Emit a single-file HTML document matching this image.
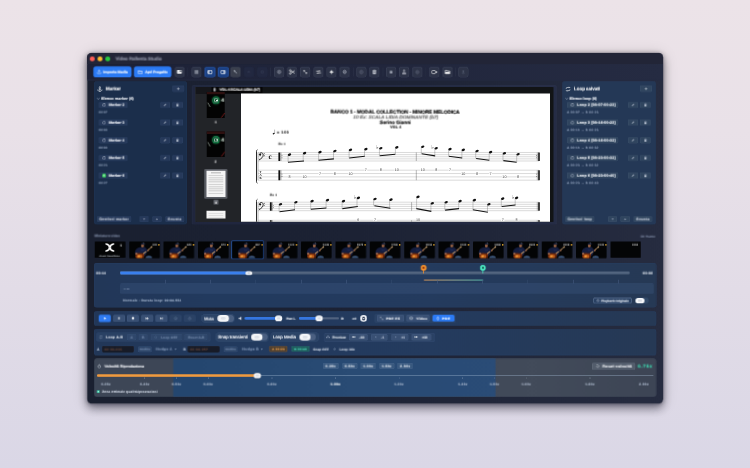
<!DOCTYPE html>
<html lang="it"><head><meta charset="utf-8"><title>Video Rallenta Studio</title>
<style>
html,body{margin:0;padding:0}
body{width:750px;height:468px;overflow:hidden;position:relative;background:linear-gradient(180deg,#ece3e8 0%,#e9e1e8 28%,#e2dce7 62%,#dad7e6 100%);font-family:"Liberation Sans",sans-serif}
#stage{transform-style:preserve-3d;position:absolute;left:0;top:0;width:3000px;height:1872px;transform:scale(.25);transform-origin:0 0}
.a{position:absolute;box-sizing:border-box}
.t{position:absolute;white-space:nowrap;line-height:1;text-rendering:geometricPrecision;-webkit-text-stroke:.4px currentColor;transform:rotate(.15deg)}
svg text{text-rendering:geometricPrecision}
</style></head><body>
<div id="stage">
<div class="a" style="left:348.8px;top:213.2px;width:2302.8px;height:1401.2px;border-radius:16.8px;background:linear-gradient(90deg,#1a2030,#1c2234 45%,#262c40);box-shadow:0 16px 40px rgba(15,15,32,.46),0 2px 16px rgba(15,15,32,.3),0 4px 64px rgba(15,15,32,.16),0 0 0 1.2px rgba(10,12,20,.5);overflow:hidden">
</div>
<div class="a" style="left:348.8px;top:213.2px;width:2302.8px;height:43.6px;background:#222537;border-radius:16.8px 16.8px 0 0;"></div>
<div class="a" style="left:348.8px;top:256.8px;width:2302.8px;height:61.6px;background:linear-gradient(90deg,#1d2136,#20253b 40%,#252b42);"></div>
<div class="a" style="left:348.8px;top:318px;width:2302.8px;height:4.4px;background:#242b42;"></div>
<div class="a" style="left:359.4px;top:225.8px;width:19.6px;height:19.6px;background:#fe5f57;border-radius:9.8px;"></div>
<div class="a" style="left:390.2px;top:225.8px;width:19.6px;height:19.6px;background:#febc2e;border-radius:9.8px;"></div>
<div class="a" style="left:421.4px;top:225.8px;width:19.6px;height:19.6px;background:#28c840;border-radius:9.8px;"></div>
<div class="t" style="left:462px;top:227.06px;font-size:18.97px;color:#9499ab;font-weight:700;letter-spacing:-0.43px;">Video Rallenta Studio</div>
<div class="a" style="left:374.4px;top:266.4px;width:151.2px;height:42.4px;background:#2b7af4;border-radius:10.4px;box-shadow:0 0 5.6px rgba(43,122,244,.5);"></div>
<svg class="a" style="left:386.4px;top:277.8px;width:20.8px;height:20.8px;overflow:visible;opacity:0.792;" viewBox="0 0 24 24"><path d="M12 3v11M7.5 8L12 3l4.5 5M4 14v5h16v-5" fill="none" stroke="#fff" stroke-width="2.4" stroke-linecap="round" stroke-linejoin="round"/></svg>
<div class="t" style="left:412.8px;top:281.59px;font-size:14.69px;color:#ffffff;font-weight:700;letter-spacing:-0.09px;">Importa Media</div>
<div class="a" style="left:536px;top:266.4px;width:148.8px;height:42.4px;background:#2b7af4;border-radius:10.4px;box-shadow:0 0 5.6px rgba(43,122,244,.5);"></div>
<svg class="a" style="left:549.6px;top:277px;width:22.4px;height:22.4px;overflow:visible;opacity:0.836;" viewBox="0 0 24 24"><path d="M3 6h7l2 2.5h9V19H3z" fill="none" stroke="#fff" stroke-width="2.4" stroke-linejoin="round"/><path d="M3 11h18" stroke="#fff" stroke-width="2.2"/></svg>
<div class="t" style="left:580px;top:281.59px;font-size:14.69px;color:#ffffff;font-weight:700;letter-spacing:-0.3px;">Apri Progetto</div>
<div class="a" style="left:698.8px;top:267.6px;width:38.8px;height:41.2px;background:#2d3347;border-radius:9.6px;box-shadow:inset 0 0 0 1.6px #464d63;"></div>
<svg class="a" style="left:705.6px;top:276.2px;width:23.2px;height:23.2px;overflow:visible;opacity:0.88;" viewBox="0 0 24 24"><rect x="2" y="4.500" width="20" height="15" rx="2.500" fill="#fff"/><path d="M13 6.500h7v6l-3-2.500-2 2z" fill="#2d3347"/></svg>
<div class="a" style="left:750.8px;top:270px;width:1.6px;height:36.4px;background:#2f354a;"></div>
<div class="a" style="left:1082px;top:270px;width:1.6px;height:36.4px;background:#2f354a;"></div>
<div class="a" style="left:1412px;top:270px;width:1.6px;height:36.4px;background:#2f354a;"></div>
<div class="a" style="left:1531.2px;top:270px;width:1.6px;height:36.4px;background:#2f354a;"></div>
<div class="a" style="left:1702.8px;top:270px;width:1.6px;height:36.4px;background:#2f354a;"></div>
<div class="a" style="left:1821.2px;top:270px;width:1.6px;height:36.4px;background:#2f354a;"></div>
<div class="a" style="left:765.6px;top:267.6px;width:40.8px;height:41.2px;background:#2d3347;border-radius:9.6px;box-shadow:inset 0 0 0 1.6px #464d63;"></div>
<svg class="a" style="left:774.8px;top:277px;width:22.4px;height:22.4px;overflow:visible;opacity:0.88;" viewBox="0 0 24 24"><path d="M4 6h16M4 10h16M4 14h16M4 18h16" stroke="#cfd4df" stroke-width="2.6"/></svg>
<div class="a" style="left:818px;top:267.6px;width:43.6px;height:41.2px;background:#1c4184;border-radius:9.6px;box-shadow:inset 0 0 0 2px #2c62bd;"></div>
<svg class="a" style="left:828.2px;top:276.6px;width:23.2px;height:23.2px;overflow:visible;opacity:0.88;" viewBox="0 0 24 24"><rect x="2" y="4" width="20" height="16" rx="3" fill="#fff"/><rect x="10" y="7" width="9" height="10" rx="1" fill="#1c4184"/><rect x="4.500" y="7" width="3" height="10" fill="#1c4184" opacity=".35"/></svg>
<div class="a" style="left:871.2px;top:267.6px;width:43.6px;height:41.2px;background:#1c4184;border-radius:9.6px;box-shadow:inset 0 0 0 2px #2c62bd;"></div>
<svg class="a" style="left:881.4px;top:276.6px;width:23.2px;height:23.2px;overflow:visible;opacity:0.88;" viewBox="0 0 24 24"><rect x="2" y="4" width="20" height="16" rx="3" fill="#fff"/><rect x="5" y="7" width="9" height="10" rx="1" fill="#1c4184"/><rect x="16.500" y="7" width="3" height="10" fill="#1c4184" opacity=".35"/></svg>
<div class="a" style="left:922.4px;top:267.6px;width:39.2px;height:41.2px;background:#3a3f4d;border-radius:9.6px;box-shadow:inset 0 0 0 1.4px #4a5060;"></div>
<svg class="a" style="left:930.8px;top:277px;width:22.4px;height:22.4px;overflow:visible;opacity:0.792;" viewBox="0 0 24 24"><path d="M5 5l4 1 10 11-2 2L6 9z" fill="#b9bec9"/><circle cx="7" cy="7" r="3.4" fill="#b9bec9"/></svg>
<div class="a" style="left:975.6px;top:267.6px;width:40.8px;height:41.2px;background:#222840;border-radius:9.6px;box-shadow:inset 0 0 0 1.2px #272d44;"></div>
<svg class="a" style="left:986px;top:278.2px;width:20px;height:20px;overflow:visible;opacity:0.7040000000000001;" viewBox="0 0 24 24"><path d="M6 16l5-8 5 8" fill="none" stroke="#59607a" stroke-width="2.4"/></svg>
<div class="a" style="left:1028.8px;top:267.6px;width:40.8px;height:41.2px;background:#222840;border-radius:9.6px;box-shadow:inset 0 0 0 1.2px #272d44;"></div>
<svg class="a" style="left:1039.2px;top:278.2px;width:20px;height:20px;overflow:visible;opacity:0.7040000000000001;" viewBox="0 0 24 24"><circle cx="12" cy="12" r="6" fill="none" stroke="#50576f" stroke-width="2.4"/></svg>
<div class="a" style="left:1096px;top:267.6px;width:40.8px;height:41.2px;background:#2d3347;border-radius:9.6px;box-shadow:inset 0 0 0 1.6px #464d63;"></div>
<svg class="a" style="left:1105.6px;top:277.4px;width:21.6px;height:21.6px;overflow:visible;opacity:0.88;" viewBox="0 0 24 24"><circle cx="12" cy="12" r="7" fill="none" stroke="#c9ceda" stroke-width="2.8"/><circle cx="12" cy="12" r="2.400" fill="#c9ceda"/></svg>
<div class="a" style="left:1147.6px;top:267.6px;width:40.8px;height:41.2px;background:#2d3347;border-radius:9.6px;box-shadow:inset 0 0 0 1.6px #464d63;"></div>
<svg class="a" style="left:1155.2px;top:275.4px;width:25.6px;height:25.6px;overflow:visible;opacity:0.88;" viewBox="0 0 24 24"><circle cx="5.5" cy="6.5" r="3" fill="none" stroke="#fff" stroke-width="2.6"/><circle cx="5.5" cy="17.5" r="3" fill="none" stroke="#fff" stroke-width="2.6"/><path d="M8 8l14 9M8 16l14-9" stroke="#fff" stroke-width="2.8"/></svg>
<div class="a" style="left:1200px;top:267.6px;width:40.8px;height:41.2px;background:#2d3347;border-radius:9.6px;box-shadow:inset 0 0 0 1.6px #464d63;"></div>
<svg class="a" style="left:1209.6px;top:277.4px;width:21.6px;height:21.6px;overflow:visible;opacity:0.836;" viewBox="0 0 24 24"><rect x="4" y="4" width="6.5" height="6.5" fill="#fff"/><rect x="13.5" y="13.5" width="6.5" height="6.5" fill="#fff"/><path d="M10 10l4 4" stroke="#fff" stroke-width="2"/></svg>
<div class="a" style="left:1253.6px;top:267.6px;width:40.8px;height:41.2px;background:#2d3347;border-radius:9.6px;box-shadow:inset 0 0 0 1.6px #464d63;"></div>
<svg class="a" style="left:1261.6px;top:275.8px;width:24.8px;height:24.8px;overflow:visible;opacity:0.88;" viewBox="0 0 24 24"><path d="M3 8.500h15l-3.500-3.500M21 15.500H6l3.500 3.500" fill="none" stroke="#fff" stroke-width="2.800" stroke-linejoin="round"/></svg>
<div class="a" style="left:1305.6px;top:267.6px;width:40.8px;height:41.2px;background:#2d3347;border-radius:9.6px;box-shadow:inset 0 0 0 1.6px #464d63;"></div>
<svg class="a" style="left:1314.8px;top:277px;width:22.4px;height:22.4px;overflow:visible;opacity:0.88;" viewBox="0 0 24 24"><circle cx="12" cy="12" r="5.500" fill="#fff"/><path d="M12 2.500v19M2.500 12h19" stroke="#fff" stroke-width="2.200"/></svg>
<div class="a" style="left:1358.4px;top:267.6px;width:40.8px;height:41.2px;background:#2d3347;border-radius:9.6px;box-shadow:inset 0 0 0 1.6px #464d63;"></div>
<svg class="a" style="left:1368px;top:277.4px;width:21.6px;height:21.6px;overflow:visible;opacity:0.88;" viewBox="0 0 24 24"><circle cx="12" cy="12" r="7" fill="none" stroke="#c4c9d5" stroke-width="2.800"/><circle cx="12" cy="12" r="2.800" fill="none" stroke="#c4c9d5" stroke-width="2"/></svg>
<div class="a" style="left:1424.8px;top:267.6px;width:40.8px;height:41.2px;background:#2d3347;border-radius:9.6px;box-shadow:inset 0 0 0 1.6px #464d63;"></div>
<svg class="a" style="left:1434.8px;top:277.8px;width:20.8px;height:20.8px;overflow:visible;opacity:0.748;" viewBox="0 0 24 24"><circle cx="12" cy="12" r="7.5" fill="none" stroke="#8e95a8" stroke-width="2.4"/><path d="M12 11v5" stroke="#8e95a8" stroke-width="2.4"/><circle cx="12" cy="8" r="1.4" fill="#8e95a8"/></svg>
<div class="a" style="left:1477.2px;top:267.6px;width:40.8px;height:41.2px;background:#2d3347;border-radius:9.6px;box-shadow:inset 0 0 0 1.6px #464d63;"></div>
<svg class="a" style="left:1486px;top:276.6px;width:23.2px;height:23.2px;overflow:visible;opacity:0.88;" viewBox="0 0 24 24"><rect x="5.5" y="3" width="13" height="18" rx="2" fill="#e6e9f0"/><path d="M8.5 8h7M8.5 12h7M8.5 16h7" stroke="#2c3245" stroke-width="1.8"/></svg>
<div class="a" style="left:1544px;top:267.6px;width:40.8px;height:41.2px;background:#2d3347;border-radius:9.6px;box-shadow:inset 0 0 0 1.6px #464d63;"></div>
<svg class="a" style="left:1554px;top:277.8px;width:20.8px;height:20.8px;overflow:visible;opacity:0.792;" viewBox="0 0 24 24"><rect x="6" y="6" width="12" height="12" rx="2" fill="#b9bfcc"/></svg>
<div class="a" style="left:1596.4px;top:267.6px;width:40.8px;height:41.2px;background:#2d3347;border-radius:9.6px;box-shadow:inset 0 0 0 1.6px #464d63;"></div>
<svg class="a" style="left:1605.2px;top:276.6px;width:23.2px;height:23.2px;overflow:visible;opacity:0.88;" viewBox="0 0 24 24"><path d="M12 3v11M8 7l4-4 4 4" fill="none" stroke="#e6e9f0" stroke-width="2.8"/><path d="M4 15h16v5H4z" fill="#e6e9f0"/></svg>
<div class="a" style="left:1649.2px;top:267.6px;width:40.8px;height:41.2px;background:#2d3347;border-radius:9.6px;box-shadow:inset 0 0 0 1.6px #464d63;"></div>
<svg class="a" style="left:1659.2px;top:277.8px;width:20.8px;height:20.8px;overflow:visible;opacity:0.748;" viewBox="0 0 24 24"><circle cx="12" cy="12" r="7.5" fill="none" stroke="#7d8498" stroke-width="2.4"/><circle cx="12" cy="12" r="3" fill="none" stroke="#7d8498" stroke-width="2"/></svg>
<div class="a" style="left:1717.2px;top:267.6px;width:40.8px;height:41.2px;background:#2d3347;border-radius:9.6px;box-shadow:inset 0 0 0 1.6px #464d63;"></div>
<svg class="a" style="left:1725.2px;top:275.8px;width:24.8px;height:24.8px;overflow:visible;opacity:0.88;" viewBox="0 0 24 24"><rect x="2.5" y="6" width="14" height="12" rx="2.4" fill="none" stroke="#fff" stroke-width="2.6"/><path d="M17 10.5l5-3v9l-5-3z" fill="#fff"/></svg>
<div class="a" style="left:1770px;top:267.6px;width:40.8px;height:41.2px;background:#2d3347;border-radius:9.6px;box-shadow:inset 0 0 0 1.6px #464d63;"></div>
<svg class="a" style="left:1778.4px;top:276.2px;width:24px;height:24px;overflow:visible;opacity:0.88;" viewBox="0 0 24 24"><path d="M3 5.5h7l2 2.5h9V19H3z" fill="none" stroke="#fff" stroke-width="2.6" stroke-linejoin="round"/><path d="M3 11h18v8H3z" fill="#fff"/></svg>
<div class="a" style="left:1832.8px;top:267.6px;width:40.8px;height:41.2px;background:#2d3347;border-radius:9.6px;box-shadow:inset 0 0 0 1.6px #464d63;"></div>
<svg class="a" style="left:1843.2px;top:278.2px;width:20px;height:20px;overflow:visible;opacity:0.7040000000000001;" viewBox="0 0 24 24"><path d="M12 5v9M8 9l4-4 4 4" fill="none" stroke="#8b92a6" stroke-width="2.4"/><path d="M6 18h12" stroke="#8b92a6" stroke-width="2.4"/></svg>
<div class="a" style="left:376px;top:325.2px;width:372px;height:572.8px;background:#1b2e4b;border-radius:12.8px;box-shadow:inset 0 0 0 1.2px #243a5c;"></div>
<svg class="a" style="left:387.2px;top:344px;width:24.8px;height:24.8px;overflow:visible;opacity:0.88;" viewBox="0 0 24 24"><circle cx="12" cy="5" r="2.6" fill="none" stroke="#fff" stroke-width="2.4"/><path d="M12 8v13M7 12h10M3.5 14c1 5 4.5 7 8.500 7s7.500-2 8.500-7" fill="none" stroke="#fff" stroke-width="2.6"/></svg>
<div class="t" style="left:422.8px;top:347.4px;font-size:18.23px;color:#ffffff;font-weight:700;letter-spacing:0.04px;">Marker</div>
<div class="a" style="left:688.8px;top:342.4px;width:48.4px;height:26px;background:#26395a;border-radius:5.6px;box-shadow:inset 0 0 0 1.2px #34496b;"></div>
<svg class="a" style="left:703.8px;top:346.2px;width:18.4px;height:18.4px;overflow:visible;opacity:0.88;" viewBox="0 0 24 24"><path d="M12 5v14M5 12h14" stroke="#e8ecf3" stroke-width="2.6"/></svg>
<svg class="a" style="left:386.4px;top:388.4px;width:14.4px;height:14.4px;overflow:visible;opacity:0.88;" viewBox="0 0 24 24"><path d="M4 7l8 9 8-9" fill="none" stroke="#d5dce8" stroke-width="3.6"/></svg>
<div class="t" style="left:405.2px;top:388.1px;font-size:14.88px;color:#f0f3f8;font-weight:700;letter-spacing:0.35px;">Elenco marker (6)</div>
<div class="a" style="left:394.8px;top:407.6px;width:114.8px;height:24.8px;background:#26395a;border-radius:5.6px;box-shadow:inset 0 0 0 1.2px #34496b;"></div>
<div class="a" style="left:409.6px;top:413.2px;width:13.6px;height:13.6px;border-radius:6.8px;box-shadow:inset 0 0 0 2.2px #d3dbe9;"></div>
<div class="t" style="left:434.8px;top:413.47px;font-size:14.51px;color:#f2f5fa;font-weight:700;letter-spacing:0.39px;">Marker 2</div>
<div class="a" style="left:640.8px;top:407.6px;width:39.6px;height:24.8px;background:#26395a;border-radius:5.6px;box-shadow:inset 0 0 0 1.2px #34496b;"></div>
<svg class="a" style="left:653.4px;top:412.8px;width:14.4px;height:14.4px;overflow:visible;opacity:0.88;" viewBox="0 0 24 24"><path d="M4 20l1-5L16 4l4 4L9 19z" fill="#c3cbd9"/></svg>
<div class="a" style="left:688.8px;top:407.6px;width:43.2px;height:24.8px;background:#26395a;border-radius:5.6px;box-shadow:inset 0 0 0 1.2px #34496b;"></div>
<svg class="a" style="left:702.4px;top:412px;width:16px;height:16px;overflow:visible;opacity:0.88;" viewBox="0 0 24 24"><path d="M6 8h12v13H6z" fill="#c3cbd9"/><path d="M4 5.5h16M9.5 3h5" stroke="#c3cbd9" stroke-width="2.4"/></svg>
<div class="t" style="left:394.8px;top:442.48px;font-size:12.28px;color:#93a3bd;letter-spacing:0.74px;">00:07</div>
<div class="a" style="left:394.8px;top:478.24px;width:114.8px;height:24.8px;background:#26395a;border-radius:5.6px;box-shadow:inset 0 0 0 1.2px #34496b;"></div>
<div class="a" style="left:409.6px;top:483.84px;width:13.6px;height:13.6px;border-radius:6.8px;box-shadow:inset 0 0 0 2.2px #d3dbe9;"></div>
<div class="t" style="left:434.8px;top:484.11px;font-size:14.51px;color:#f2f5fa;font-weight:700;letter-spacing:0.39px;">Marker 3</div>
<div class="a" style="left:640.8px;top:478.24px;width:39.6px;height:24.8px;background:#26395a;border-radius:5.6px;box-shadow:inset 0 0 0 1.2px #34496b;"></div>
<svg class="a" style="left:653.4px;top:483.44px;width:14.4px;height:14.4px;overflow:visible;opacity:0.88;" viewBox="0 0 24 24"><path d="M4 20l1-5L16 4l4 4L9 19z" fill="#c3cbd9"/></svg>
<div class="a" style="left:688.8px;top:478.24px;width:43.2px;height:24.8px;background:#26395a;border-radius:5.6px;box-shadow:inset 0 0 0 1.2px #34496b;"></div>
<svg class="a" style="left:702.4px;top:482.64px;width:16px;height:16px;overflow:visible;opacity:0.88;" viewBox="0 0 24 24"><path d="M6 8h12v13H6z" fill="#c3cbd9"/><path d="M4 5.5h16M9.5 3h5" stroke="#c3cbd9" stroke-width="2.4"/></svg>
<div class="t" style="left:394.8px;top:513.12px;font-size:12.28px;color:#93a3bd;letter-spacing:0.74px;">00:09</div>
<div class="a" style="left:394.8px;top:548.88px;width:114.8px;height:24.8px;background:#26395a;border-radius:5.6px;box-shadow:inset 0 0 0 1.2px #34496b;"></div>
<div class="a" style="left:409.6px;top:554.48px;width:13.6px;height:13.6px;border-radius:6.8px;box-shadow:inset 0 0 0 2.2px #d3dbe9;"></div>
<div class="t" style="left:434.8px;top:554.75px;font-size:14.51px;color:#f2f5fa;font-weight:700;letter-spacing:0.39px;">Marker 4</div>
<div class="a" style="left:640.8px;top:548.88px;width:39.6px;height:24.8px;background:#26395a;border-radius:5.6px;box-shadow:inset 0 0 0 1.2px #34496b;"></div>
<svg class="a" style="left:653.4px;top:554.08px;width:14.4px;height:14.4px;overflow:visible;opacity:0.88;" viewBox="0 0 24 24"><path d="M4 20l1-5L16 4l4 4L9 19z" fill="#c3cbd9"/></svg>
<div class="a" style="left:688.8px;top:548.88px;width:43.2px;height:24.8px;background:#26395a;border-radius:5.6px;box-shadow:inset 0 0 0 1.2px #34496b;"></div>
<svg class="a" style="left:702.4px;top:553.28px;width:16px;height:16px;overflow:visible;opacity:0.88;" viewBox="0 0 24 24"><path d="M6 8h12v13H6z" fill="#c3cbd9"/><path d="M4 5.5h16M9.5 3h5" stroke="#c3cbd9" stroke-width="2.4"/></svg>
<div class="t" style="left:394.8px;top:583.76px;font-size:12.28px;color:#93a3bd;letter-spacing:0.74px;">00:00</div>
<div class="a" style="left:394.8px;top:619.52px;width:114.8px;height:24.8px;background:#26395a;border-radius:5.6px;box-shadow:inset 0 0 0 1.2px #34496b;"></div>
<div class="a" style="left:409.6px;top:625.12px;width:13.6px;height:13.6px;border-radius:6.8px;box-shadow:inset 0 0 0 2.2px #d3dbe9;"></div>
<div class="t" style="left:434.8px;top:625.39px;font-size:14.51px;color:#f2f5fa;font-weight:700;letter-spacing:0.39px;">Marker 5</div>
<div class="a" style="left:640.8px;top:619.52px;width:39.6px;height:24.8px;background:#26395a;border-radius:5.6px;box-shadow:inset 0 0 0 1.2px #34496b;"></div>
<svg class="a" style="left:653.4px;top:624.72px;width:14.4px;height:14.4px;overflow:visible;opacity:0.88;" viewBox="0 0 24 24"><path d="M4 20l1-5L16 4l4 4L9 19z" fill="#c3cbd9"/></svg>
<div class="a" style="left:688.8px;top:619.52px;width:43.2px;height:24.8px;background:#26395a;border-radius:5.6px;box-shadow:inset 0 0 0 1.2px #34496b;"></div>
<svg class="a" style="left:702.4px;top:623.92px;width:16px;height:16px;overflow:visible;opacity:0.88;" viewBox="0 0 24 24"><path d="M6 8h12v13H6z" fill="#c3cbd9"/><path d="M4 5.5h16M9.5 3h5" stroke="#c3cbd9" stroke-width="2.4"/></svg>
<div class="t" style="left:394.8px;top:654.4px;font-size:12.28px;color:#93a3bd;letter-spacing:0.74px;">00:23</div>
<div class="a" style="left:394.8px;top:690.16px;width:114.8px;height:24.8px;background:#26395a;border-radius:5.6px;box-shadow:inset 0 0 0 1.2px #34496b;"></div>
<div class="a" style="left:407.6px;top:693.96px;width:17.2px;height:17.2px;background:#35b85c;border-radius:7.6px;"></div>
<div class="a" style="left:412px;top:698.36px;width:8.4px;height:8.4px;border-radius:4.2px;box-shadow:inset 0 0 0 1.8px #a5efbd;"></div>
<div class="t" style="left:434.8px;top:696.03px;font-size:14.51px;color:#f2f5fa;font-weight:700;letter-spacing:0.39px;">Marker 6</div>
<div class="a" style="left:640.8px;top:690.16px;width:39.6px;height:24.8px;background:#26395a;border-radius:5.6px;box-shadow:inset 0 0 0 1.2px #34496b;"></div>
<svg class="a" style="left:653.4px;top:695.36px;width:14.4px;height:14.4px;overflow:visible;opacity:0.88;" viewBox="0 0 24 24"><path d="M4 20l1-5L16 4l4 4L9 19z" fill="#c3cbd9"/></svg>
<div class="a" style="left:688.8px;top:690.16px;width:43.2px;height:24.8px;background:#26395a;border-radius:5.6px;box-shadow:inset 0 0 0 1.2px #34496b;"></div>
<svg class="a" style="left:702.4px;top:694.56px;width:16px;height:16px;overflow:visible;opacity:0.88;" viewBox="0 0 24 24"><path d="M6 8h12v13H6z" fill="#c3cbd9"/><path d="M4 5.5h16M9.5 3h5" stroke="#c3cbd9" stroke-width="2.4"/></svg>
<div class="t" style="left:394.8px;top:725.04px;font-size:12.28px;color:#93a3bd;letter-spacing:0.74px;">00:27</div>
<div class="a" style="left:388px;top:864.8px;width:137.2px;height:23.6px;background:#26395a;border-radius:5.6px;box-shadow:inset 0 0 0 1.2px #34496b;"></div>
<div class="t" style="left:396.8px;top:869.81px;font-size:13.76px;color:#d9dfea;font-weight:700;letter-spacing:1.09px;">Gestisci marker</div>
<div class="a" style="left:558px;top:864.8px;width:37.2px;height:23.6px;background:#26395a;border-radius:5.6px;box-shadow:inset 0 0 0 1.2px #34496b;"></div>
<svg class="a" style="left:569px;top:869px;width:15.2px;height:15.2px;overflow:visible;opacity:0.88;" viewBox="0 0 24 24"><path d="M12 19V6M7 11l5-5 5 5" fill="none" stroke="#c3cbd9" stroke-width="2.6"/></svg>
<div class="a" style="left:608.8px;top:864.8px;width:38px;height:23.6px;background:#26395a;border-radius:5.6px;box-shadow:inset 0 0 0 1.2px #34496b;"></div>
<svg class="a" style="left:620.2px;top:869px;width:15.2px;height:15.2px;overflow:visible;opacity:0.88;" viewBox="0 0 24 24"><path d="M12 5v13M7 13l5 5 5-5" fill="none" stroke="#c3cbd9" stroke-width="2.6"/></svg>
<div class="a" style="left:660.8px;top:864.8px;width:76px;height:23.6px;background:#26395a;border-radius:5.6px;box-shadow:inset 0 0 0 1.2px #34496b;"></div>
<div class="t" style="left:671.2px;top:869.81px;font-size:13.76px;color:#d9dfea;font-weight:700;letter-spacing:1.55px;">Svuota</div>
<div class="a" style="left:2249.2px;top:325.2px;width:374.8px;height:572.8px;background:#243856;border-radius:12.8px;box-shadow:inset 0 0 0 1.2px #2c4264;"></div>
<svg class="a" style="left:2260.4px;top:344px;width:24.8px;height:24.8px;overflow:visible;opacity:0.88;" viewBox="0 0 24 24"><path d="M5 11V9a3 3 0 013-3h11l-3-3M19 13v2a3 3 0 01-3 3H5l3 3" fill="none" stroke="#fff" stroke-width="2.6" stroke-linejoin="round"/></svg>
<div class="t" style="left:2296px;top:347.4px;font-size:18.23px;color:#ffffff;font-weight:700;letter-spacing:-0.26px;">Loop salvati</div>
<div class="a" style="left:2560px;top:342.4px;width:48.4px;height:26px;background:#30455f;border-radius:5.6px;box-shadow:inset 0 0 0 1.2px #40556f;"></div>
<svg class="a" style="left:2575px;top:346.2px;width:18.4px;height:18.4px;overflow:visible;opacity:0.88;" viewBox="0 0 24 24"><path d="M12 5v14M5 12h14" stroke="#e8ecf3" stroke-width="2.6"/></svg>
<svg class="a" style="left:2259.6px;top:388.4px;width:14.4px;height:14.4px;overflow:visible;opacity:0.88;" viewBox="0 0 24 24"><path d="M4 7l8 9 8-9" fill="none" stroke="#d5dce8" stroke-width="3.6"/></svg>
<div class="t" style="left:2278.4px;top:388.1px;font-size:14.88px;color:#f0f3f8;font-weight:700;letter-spacing:0.2px;">Elenco loop (6)</div>
<div class="a" style="left:2268px;top:407.6px;width:205.2px;height:24.8px;background:#30455f;border-radius:5.6px;box-shadow:inset 0 0 0 1.2px #40556f;"></div>
<div class="a" style="left:2282.8px;top:413.2px;width:13.6px;height:13.6px;border-radius:6.8px;box-shadow:inset 0 0 0 2.2px #d3dbe9;"></div>
<div class="t" style="left:2308px;top:413.47px;font-size:14.51px;color:#f2f5fa;font-weight:700;letter-spacing:0.71px;">Loop 2 [00:07-00:23]</div>
<div class="a" style="left:2512px;top:407.6px;width:39.6px;height:24.8px;background:#30455f;border-radius:5.6px;box-shadow:inset 0 0 0 1.2px #40556f;"></div>
<svg class="a" style="left:2524.6px;top:412.8px;width:14.4px;height:14.4px;overflow:visible;opacity:0.88;" viewBox="0 0 24 24"><path d="M4 20l1-5L16 4l4 4L9 19z" fill="#c3cbd9"/></svg>
<div class="a" style="left:2560px;top:407.6px;width:43.2px;height:24.8px;background:#30455f;border-radius:5.6px;box-shadow:inset 0 0 0 1.2px #40556f;"></div>
<svg class="a" style="left:2573.6px;top:412px;width:16px;height:16px;overflow:visible;opacity:0.88;" viewBox="0 0 24 24"><path d="M6 8h12v13H6z" fill="#c3cbd9"/><path d="M4 5.5h16M9.5 3h5" stroke="#c3cbd9" stroke-width="2.4"/></svg>
<div class="t" style="left:2268px;top:442.48px;font-size:12.28px;color:#93a3bd;letter-spacing:1.35px;">A 00:07 → B 00:23</div>
<div class="a" style="left:2268px;top:478.24px;width:205.2px;height:24.8px;background:#30455f;border-radius:5.6px;box-shadow:inset 0 0 0 1.2px #40556f;"></div>
<div class="a" style="left:2282.8px;top:483.84px;width:13.6px;height:13.6px;border-radius:6.8px;box-shadow:inset 0 0 0 2.2px #d3dbe9;"></div>
<div class="t" style="left:2308px;top:484.11px;font-size:14.51px;color:#f2f5fa;font-weight:700;letter-spacing:0.71px;">Loop 3 [00:16-00:23]</div>
<div class="a" style="left:2512px;top:478.24px;width:39.6px;height:24.8px;background:#30455f;border-radius:5.6px;box-shadow:inset 0 0 0 1.2px #40556f;"></div>
<svg class="a" style="left:2524.6px;top:483.44px;width:14.4px;height:14.4px;overflow:visible;opacity:0.88;" viewBox="0 0 24 24"><path d="M4 20l1-5L16 4l4 4L9 19z" fill="#c3cbd9"/></svg>
<div class="a" style="left:2560px;top:478.24px;width:43.2px;height:24.8px;background:#30455f;border-radius:5.6px;box-shadow:inset 0 0 0 1.2px #40556f;"></div>
<svg class="a" style="left:2573.6px;top:482.64px;width:16px;height:16px;overflow:visible;opacity:0.88;" viewBox="0 0 24 24"><path d="M6 8h12v13H6z" fill="#c3cbd9"/><path d="M4 5.5h16M9.5 3h5" stroke="#c3cbd9" stroke-width="2.4"/></svg>
<div class="t" style="left:2268px;top:513.12px;font-size:12.28px;color:#93a3bd;letter-spacing:1.35px;">A 00:16 → B 00:23</div>
<div class="a" style="left:2268px;top:548.88px;width:205.2px;height:24.8px;background:#30455f;border-radius:5.6px;box-shadow:inset 0 0 0 1.2px #40556f;"></div>
<div class="a" style="left:2282.8px;top:554.48px;width:13.6px;height:13.6px;border-radius:6.8px;box-shadow:inset 0 0 0 2.2px #d3dbe9;"></div>
<div class="t" style="left:2308px;top:554.75px;font-size:14.51px;color:#f2f5fa;font-weight:700;letter-spacing:0.71px;">Loop 4 [00:16-00:32]</div>
<div class="a" style="left:2512px;top:548.88px;width:39.6px;height:24.8px;background:#30455f;border-radius:5.6px;box-shadow:inset 0 0 0 1.2px #40556f;"></div>
<svg class="a" style="left:2524.6px;top:554.08px;width:14.4px;height:14.4px;overflow:visible;opacity:0.88;" viewBox="0 0 24 24"><path d="M4 20l1-5L16 4l4 4L9 19z" fill="#c3cbd9"/></svg>
<div class="a" style="left:2560px;top:548.88px;width:43.2px;height:24.8px;background:#30455f;border-radius:5.6px;box-shadow:inset 0 0 0 1.2px #40556f;"></div>
<svg class="a" style="left:2573.6px;top:553.28px;width:16px;height:16px;overflow:visible;opacity:0.88;" viewBox="0 0 24 24"><path d="M6 8h12v13H6z" fill="#c3cbd9"/><path d="M4 5.5h16M9.5 3h5" stroke="#c3cbd9" stroke-width="2.4"/></svg>
<div class="t" style="left:2268px;top:583.76px;font-size:12.28px;color:#93a3bd;letter-spacing:1.35px;">A 00:16 → B 00:32</div>
<div class="a" style="left:2268px;top:619.52px;width:205.2px;height:24.8px;background:#30455f;border-radius:5.6px;box-shadow:inset 0 0 0 1.2px #40556f;"></div>
<div class="a" style="left:2282.8px;top:625.12px;width:13.6px;height:13.6px;border-radius:6.8px;box-shadow:inset 0 0 0 2.2px #d3dbe9;"></div>
<div class="t" style="left:2308px;top:625.39px;font-size:14.51px;color:#f2f5fa;font-weight:700;letter-spacing:0.71px;">Loop 5 [00:23-00:32]</div>
<div class="a" style="left:2512px;top:619.52px;width:39.6px;height:24.8px;background:#30455f;border-radius:5.6px;box-shadow:inset 0 0 0 1.2px #40556f;"></div>
<svg class="a" style="left:2524.6px;top:624.72px;width:14.4px;height:14.4px;overflow:visible;opacity:0.88;" viewBox="0 0 24 24"><path d="M4 20l1-5L16 4l4 4L9 19z" fill="#c3cbd9"/></svg>
<div class="a" style="left:2560px;top:619.52px;width:43.2px;height:24.8px;background:#30455f;border-radius:5.6px;box-shadow:inset 0 0 0 1.2px #40556f;"></div>
<svg class="a" style="left:2573.6px;top:623.92px;width:16px;height:16px;overflow:visible;opacity:0.88;" viewBox="0 0 24 24"><path d="M6 8h12v13H6z" fill="#c3cbd9"/><path d="M4 5.5h16M9.5 3h5" stroke="#c3cbd9" stroke-width="2.4"/></svg>
<div class="t" style="left:2268px;top:654.4px;font-size:12.28px;color:#93a3bd;letter-spacing:1.35px;">A 00:23 → B 00:32</div>
<div class="a" style="left:2268px;top:690.16px;width:205.2px;height:24.8px;background:#30455f;border-radius:5.6px;box-shadow:inset 0 0 0 1.2px #40556f;"></div>
<div class="a" style="left:2282.8px;top:695.76px;width:13.6px;height:13.6px;border-radius:6.8px;box-shadow:inset 0 0 0 2.2px #d3dbe9;"></div>
<div class="t" style="left:2308px;top:696.03px;font-size:14.51px;color:#f2f5fa;font-weight:700;letter-spacing:0.71px;">Loop 6 [00:23-00:40]</div>
<div class="a" style="left:2512px;top:690.16px;width:39.6px;height:24.8px;background:#30455f;border-radius:5.6px;box-shadow:inset 0 0 0 1.2px #40556f;"></div>
<svg class="a" style="left:2524.6px;top:695.36px;width:14.4px;height:14.4px;overflow:visible;opacity:0.88;" viewBox="0 0 24 24"><path d="M4 20l1-5L16 4l4 4L9 19z" fill="#c3cbd9"/></svg>
<div class="a" style="left:2560px;top:690.16px;width:43.2px;height:24.8px;background:#30455f;border-radius:5.6px;box-shadow:inset 0 0 0 1.2px #40556f;"></div>
<svg class="a" style="left:2573.6px;top:694.56px;width:16px;height:16px;overflow:visible;opacity:0.88;" viewBox="0 0 24 24"><path d="M6 8h12v13H6z" fill="#c3cbd9"/><path d="M4 5.5h16M9.5 3h5" stroke="#c3cbd9" stroke-width="2.4"/></svg>
<div class="t" style="left:2268px;top:725.04px;font-size:12.28px;color:#93a3bd;letter-spacing:1.35px;">A 00:23 → B 00:40</div>
<div class="a" style="left:2261.2px;top:864.8px;width:116.4px;height:23.6px;background:#30455f;border-radius:5.6px;box-shadow:inset 0 0 0 1.2px #40556f;"></div>
<div class="t" style="left:2270px;top:869.81px;font-size:13.76px;color:#d9dfea;font-weight:700;letter-spacing:0.95px;">Gestisci loop</div>
<div class="a" style="left:2432px;top:864.8px;width:36.4px;height:23.6px;background:#30455f;border-radius:5.6px;box-shadow:inset 0 0 0 1.2px #40556f;"></div>
<svg class="a" style="left:2442.6px;top:869px;width:15.2px;height:15.2px;overflow:visible;opacity:0.88;" viewBox="0 0 24 24"><path d="M12 19V6M7 11l5-5 5 5" fill="none" stroke="#c3cbd9" stroke-width="2.6"/></svg>
<div class="a" style="left:2480.8px;top:864.8px;width:39.6px;height:23.6px;background:#30455f;border-radius:5.6px;box-shadow:inset 0 0 0 1.2px #40556f;"></div>
<svg class="a" style="left:2493px;top:869px;width:15.2px;height:15.2px;overflow:visible;opacity:0.88;" viewBox="0 0 24 24"><path d="M12 5v13M7 13l5 5 5-5" fill="none" stroke="#c3cbd9" stroke-width="2.6"/></svg>
<div class="a" style="left:2534.4px;top:864.8px;width:74.8px;height:23.6px;background:#30455f;border-radius:5.6px;box-shadow:inset 0 0 0 1.2px #40556f;"></div>
<div class="t" style="left:2544.8px;top:869.81px;font-size:13.76px;color:#d9dfea;font-weight:700;letter-spacing:1.35px;">Svuota</div>
<div class="a" style="left:767.6px;top:341.2px;width:1458px;height:557.2px;background:rgba(48,58,104,.22);border-radius:6.4px;box-shadow:inset 0 0 0 1.2px rgba(120,130,170,.28);"></div>
<div class="a" style="left:782px;top:348px;width:1432px;height:540px;background:#121416;border-radius:3.2px;"></div>
<div class="a" style="left:782px;top:348px;width:182.8px;height:540px;background:#222428;border-radius:4.8px 0 0 4.8px;"></div>
<div class="a" style="left:782px;top:348px;width:182.8px;height:28px;background:#15161a;"></div>
<div class="a" style="left:846.4px;top:348px;width:203.6px;height:26.4px;background:#050506;border-radius:0 0 6px 0;"></div>
<div class="a" style="left:781.6px;top:348px;width:1.6px;height:540px;background:#3a3d45;"></div>
<svg class="a" style="left:850px;top:350.4px;width:16.8px;height:16.8px;overflow:visible;opacity:0.88;" viewBox="0 0 24 24"><rect x="5.5" y="3" width="13" height="18" rx="2" fill="#e6e9f0"/><path d="M8.500 8h7M8.500 12h7M8.500 16h7" stroke="#111" stroke-width="1.8"/></svg>
<div class="t" style="left:878.4px;top:352.47px;font-size:14.51px;color:#f4f4f4;font-weight:700;letter-spacing:-0.21px;">VOL 4 SCALA LIDIA (b7)</div>
<div class="a" style="left:827.2px;top:368px;width:72px;height:104px;background:#030303;"></div>
<div class="a" style="left:827.2px;top:368px;width:72px;height:9.2px;background:#2e1010;"></div>
<div class="a" style="left:841.6px;top:378.8px;width:44.8px;height:44.8px;background:radial-gradient(circle,#0f4a2b 0%,#0b331e 45%,rgba(5,20,12,0) 70%);"></div>
<div class="a" style="left:849.6px;top:386.8px;width:28.8px;height:28.8px;background:#0d4a2c;border-radius:14.4px;box-shadow:inset 0 0 0 3.2px #1f9a5a;"></div>
<div class="a" style="left:856px;top:393.2px;width:16px;height:16px;border-radius:8px;box-shadow:inset 0 0 0 2.2px #d9f3e4;"></div>
<div class="a" style="left:864px;top:400px;width:8px;height:2.4px;background:#d9f3e4;"></div>
<div class="t" style="left:884.81px;top:392.16px;font-size:20.09px;color:#dff3e6;font-weight:700;letter-spacing:-0px;">4</div>
<svg class="a" style="left:827.2px;top:368px;width:72px;height:104px;overflow:visible;" viewBox="0 0 18 26"><path d="M1 10.600L3.400 15" stroke="#cfe0d2" stroke-width=".7" opacity=".75"/><path d="M14.500 25.7 L18 21" stroke="#8d1f1f" stroke-width=".8"/></svg>
<div class="t" style="left:858.68px;top:481.57px;font-size:13.39px;color:#e5e5e5;font-weight:700;letter-spacing:0px;">1</div>
<div class="a" style="left:827.2px;top:526.4px;width:72px;height:101.6px;background:#030303;"></div>
<div class="a" style="left:827.2px;top:526.4px;width:72px;height:9.2px;background:#2e1010;"></div>
<div class="a" style="left:841.6px;top:537.2px;width:44.8px;height:44.8px;background:radial-gradient(circle,#0f4a2b 0%,#0b331e 45%,rgba(5,20,12,0) 70%);"></div>
<div class="a" style="left:849.6px;top:545.2px;width:28.8px;height:28.8px;background:#0d4a2c;border-radius:14.4px;box-shadow:inset 0 0 0 3.2px #1f9a5a;"></div>
<div class="a" style="left:856px;top:551.6px;width:16px;height:16px;border-radius:8px;box-shadow:inset 0 0 0 2.2px #d9f3e4;"></div>
<div class="a" style="left:864px;top:558.4px;width:8px;height:2.4px;background:#d9f3e4;"></div>
<div class="t" style="left:884.81px;top:550.56px;font-size:20.09px;color:#dff3e6;font-weight:700;letter-spacing:-0px;">4</div>
<svg class="a" style="left:827.2px;top:526.4px;width:72px;height:101.6px;overflow:visible;" viewBox="0 0 18 25.4"><path d="M1 10.600L3.400 15" stroke="#cfe0d2" stroke-width=".7" opacity=".75"/><path d="M14.500 25.1 L18 20.4" stroke="#8d1f1f" stroke-width=".8"/></svg>
<div class="t" style="left:858.68px;top:640.77px;font-size:13.39px;color:#e5e5e5;font-weight:700;letter-spacing:0px;">2</div>
<div class="a" style="left:817.2px;top:676px;width:92.8px;height:118.8px;background:#5a5d64;border-radius:4.8px;"></div>
<div class="a" style="left:826px;top:683.2px;width:76.4px;height:104.8px;background:#f4f4f4;"></div>
<div class="a" style="left:834.4px;top:700px;width:58.4px;height:1.4px;background:#8b8b8b;"></div>
<div class="a" style="left:834.4px;top:703.2px;width:58.4px;height:0.8px;background:#c5c5c5;"></div>
<div class="a" style="left:834.4px;top:709px;width:58.4px;height:1.4px;background:#8b8b8b;"></div>
<div class="a" style="left:834.4px;top:712.2px;width:58.4px;height:0.8px;background:#c5c5c5;"></div>
<div class="a" style="left:834.4px;top:718px;width:58.4px;height:1.4px;background:#8b8b8b;"></div>
<div class="a" style="left:834.4px;top:721.2px;width:58.4px;height:0.8px;background:#c5c5c5;"></div>
<div class="a" style="left:834.4px;top:727px;width:58.4px;height:1.4px;background:#8b8b8b;"></div>
<div class="a" style="left:834.4px;top:730.2px;width:58.4px;height:0.8px;background:#c5c5c5;"></div>
<div class="a" style="left:834.4px;top:736px;width:58.4px;height:1.4px;background:#8b8b8b;"></div>
<div class="a" style="left:834.4px;top:739.2px;width:58.4px;height:0.8px;background:#c5c5c5;"></div>
<div class="a" style="left:834.4px;top:745px;width:58.4px;height:1.4px;background:#8b8b8b;"></div>
<div class="a" style="left:834.4px;top:748.2px;width:58.4px;height:0.8px;background:#c5c5c5;"></div>
<div class="a" style="left:834.4px;top:754px;width:58.4px;height:1.4px;background:#8b8b8b;"></div>
<div class="a" style="left:834.4px;top:757.2px;width:58.4px;height:0.8px;background:#c5c5c5;"></div>
<div class="a" style="left:834.4px;top:763px;width:58.4px;height:1.4px;background:#8b8b8b;"></div>
<div class="a" style="left:834.4px;top:766.2px;width:58.4px;height:0.8px;background:#c5c5c5;"></div>
<div class="a" style="left:834.4px;top:772px;width:58.4px;height:1.4px;background:#8b8b8b;"></div>
<div class="a" style="left:834.4px;top:775.2px;width:58.4px;height:0.8px;background:#c5c5c5;"></div>
<div class="a" style="left:844px;top:690.4px;width:40px;height:2.4px;background:#9a9a9a;"></div>
<div class="a" style="left:854.4px;top:799.2px;width:20px;height:19.2px;background:#5f6269;border-radius:3.2px;"></div>
<div class="t" style="left:860.88px;top:803.51px;font-size:12.65px;color:#f0f0f0;font-weight:700;letter-spacing:0px;">3</div>
<div class="a" style="left:826px;top:842.8px;width:76.4px;height:31.6px;background:#f4f4f4;"></div>
<div class="a" style="left:834.4px;top:852.8px;width:58.4px;height:1.2px;background:#a5a5a5;"></div>
<div class="a" style="left:834.4px;top:861.6px;width:58.4px;height:1.2px;background:#a5a5a5;"></div>
<div class="a" style="left:834.4px;top:869.6px;width:58.4px;height:1.2px;background:#b5b5b5;"></div>
<div class="a" style="left:964px;top:374px;width:1236px;height:513.2px;background:#ffffff;"></div>
<div class="t" style="left:1322.4px;top:439.41px;font-size:19.98px;color:#000000;font-weight:700;letter-spacing:-0.2px;-webkit-text-stroke:.7px #000;">BANCO 1 - MODAL COLLECTION - MINORE MELODICA</div>
<div class="t" style="left:1413.4px;top:461.16px;font-size:18.75px;color:#3a3a3a;font-style:italic;letter-spacing:0.41px;-webkit-text-stroke:.5px #3a3a3a;">10 Ex: SCALA LIDIA DOMINANTE (b7)</div>
<div class="t" style="left:1518.8px;top:480.58px;font-size:19.16px;color:#000000;font-weight:700;letter-spacing:0.02px;-webkit-text-stroke:.7px #000;">Serino Gianni</div>
<div class="t" style="left:1561.2px;top:501.7px;font-size:14.01px;color:#000000;font-weight:700;letter-spacing:0.91px;-webkit-text-stroke:.6px #000;">VOL 4</div>
<div class="t" style="left:1108px;top:523.33px;font-size:14.83px;color:#0a0a0a;font-weight:700;letter-spacing:2.25px;">= 100</div>
<div class="t" style="left:1113.6px;top:568.65px;font-size:12.77px;color:#111111;font-weight:700;letter-spacing:0.93px;font-family:'Liberation Serif',serif;">Ex 1</div>
<div class="t" style="left:1079.6px;top:773.05px;font-size:12.77px;color:#111111;font-weight:700;letter-spacing:0.83px;font-family:'Liberation Serif',serif;">Ex 1</div>
<svg class="a" style="left:964px;top:374px;width:1236px;height:513.2px;overflow:hidden" viewBox="241 93.5 309 128.3"><ellipse cx="273.7" cy="133.6" rx="1.05" ry=".75" transform="rotate(-22 273.7 133.6)" fill="#111"/><path d="M274.6 133.4V129.600" stroke="#111" stroke-width=".3"/><path d="M258 152.5H539" stroke="#8c8c8c" stroke-width=".32"/><path d="M258 154.62H539" stroke="#8c8c8c" stroke-width=".32"/><path d="M258 156.75H539" stroke="#8c8c8c" stroke-width=".32"/><path d="M258 158.88H539" stroke="#8c8c8c" stroke-width=".32"/><path d="M258 161H539" stroke="#8c8c8c" stroke-width=".32"/><path d="M258 170.2H539" stroke="#8c8c8c" stroke-width=".32"/><path d="M258 173.53H539" stroke="#8c8c8c" stroke-width=".32"/><path d="M258 176.87H539" stroke="#8c8c8c" stroke-width=".32"/><path d="M258 180.2H539" stroke="#8c8c8c" stroke-width=".32"/><path d="M258 152.500V180.200" stroke="#333" stroke-width=".35"/><path d="M257.400 149.700C256.300 150.500 256.500 151 256.500 152V181C256.500 182 256.300 182.400 257.400 183.200" fill="none" stroke="#111" stroke-width=".9"/><path d="M279.300 152.5V161" stroke="#111" stroke-width="1.8"/><path d="M281.000 152.5V161" stroke="#111" stroke-width=".3"/><circle cx="282" cy="155.65" r=".45" fill="#111"/><circle cx="282" cy="157.85" r=".45" fill="#111"/><path d="M416.300 152.5V161" stroke="#333" stroke-width=".35"/><path d="M539 152.5V161" stroke="#111" stroke-width="1.6"/><path d="M537.300 152.5V161" stroke="#111" stroke-width=".3"/><circle cx="536.600" cy="155.65" r=".4" fill="#111"/><circle cx="536.600" cy="157.85" r=".4" fill="#111"/><path d="M279.300 170.2V180.2" stroke="#111" stroke-width="1.8"/><path d="M281.000 170.2V180.2" stroke="#111" stroke-width=".3"/><circle cx="282" cy="174.1" r=".45" fill="#111"/><circle cx="282" cy="176.3" r=".45" fill="#111"/><path d="M416.300 170.2V180.2" stroke="#333" stroke-width=".35"/><path d="M539 170.2V180.2" stroke="#111" stroke-width="1.6"/><path d="M537.300 170.2V180.2" stroke="#111" stroke-width=".3"/><circle cx="536.600" cy="174.1" r=".4" fill="#111"/><circle cx="536.600" cy="176.3" r=".4" fill="#111"/><circle cx="260.2" cy="154.8" r=".95" fill="#111"/><path d="M259.5 154.7C259.2 152.3 263 151.9 263.2 154.7C263.4 157.1 261.2 158.7 259.3 159.8" fill="none" stroke="#111" stroke-width=".85" stroke-linecap="round"/><circle cx="264.6" cy="153.6" r=".45" fill="#111"/><circle cx="264.6" cy="155.7" r=".45" fill="#111"/><text x="268.600" y="159.300" font-size="7.4" font-weight="700" font-family="'Liberation Serif',serif" fill="#111">c</text><text x="259.600" y="173.300" font-size="3" font-weight="700" font-family="'Liberation Serif',serif" fill="#111">T</text><text x="259.600" y="176.300" font-size="3" font-weight="700" font-family="'Liberation Serif',serif" fill="#111">A</text><text x="259.600" y="179.300" font-size="3" font-weight="700" font-family="'Liberation Serif',serif" fill="#111">B</text><path d="M288 161.75L304 160.45L304 161.55L288 162.85z" fill="#111"/><path d="M318.5 159.65L333.9 158.35L333.9 159.45L318.5 160.75z" fill="#111"/><path d="M349.2 157.45L364.8 155.75L364.8 156.85L349.2 158.55z" fill="#111"/><path d="M379.7 155.15L395.3 153.65L395.3 154.75L379.7 156.25z" fill="#111"/><path d="M421.7 153.25L435.1 155.35L435.1 156.45L421.7 154.35z" fill="#111"/><path d="M448.8 155.75L462.2 157.45L462.2 158.55L448.8 156.85z" fill="#111"/><path d="M476.1 157.95L489.3 159.65L489.3 160.75L476.1 159.05z" fill="#111"/><path d="M503.4 160.05L516.6 161.75L516.6 162.85L503.4 161.15z" fill="#111"/><path d="M288.1 154.6V162.29" stroke="#444" stroke-width=".28"/><ellipse cx="289.5" cy="154.6" rx="1.75" ry="1.15" transform="rotate(-22 289.5 154.6)" fill="#111"/><path d="M303.2 153.1V161.06" stroke="#444" stroke-width=".28"/><ellipse cx="304.6" cy="153.1" rx="1.75" ry="1.15" transform="rotate(-22 304.6 153.1)" fill="#111"/><path d="M318.6 152.1V160.19" stroke="#444" stroke-width=".28"/><ellipse cx="320" cy="152.1" rx="1.75" ry="1.15" transform="rotate(-22 320 152.1)" fill="#111"/><path d="M333.5 151V158.93" stroke="#444" stroke-width=".28"/><ellipse cx="334.9" cy="151" rx="1.75" ry="1.15" transform="rotate(-22 334.9 151)" fill="#111"/><path d="M349.1 149.9V158.01" stroke="#444" stroke-width=".28"/><ellipse cx="350.5" cy="149.9" rx="1.75" ry="1.15" transform="rotate(-22 350.5 149.9)" fill="#111"/><path d="M364.5 149.1V156.33" stroke="#444" stroke-width=".28"/><ellipse cx="365.9" cy="149.1" rx="1.75" ry="1.15" transform="rotate(-22 365.9 149.1)" fill="#111"/><path d="M379.4 148.2V155.73" stroke="#444" stroke-width=".28"/><ellipse cx="380.8" cy="148.2" rx="1.75" ry="1.15" transform="rotate(-22 380.8 148.2)" fill="#111"/><text x="375.9" y="149.4" font-size="5.6" font-family="'DejaVu Sans',sans-serif" fill="#111">♭</text><path d="M395.4 147.4V154.19" stroke="#444" stroke-width=".28"/><ellipse cx="396.8" cy="147.4" rx="1.75" ry="1.15" transform="rotate(-22 396.8 147.4)" fill="#111"/><path d="M421.3 146.7V153.74" stroke="#444" stroke-width=".28"/><ellipse cx="422.7" cy="146.7" rx="1.75" ry="1.15" transform="rotate(-22 422.7 146.7)" fill="#111"/><path d="M434.8 148.2V155.85" stroke="#444" stroke-width=".28"/><ellipse cx="436.2" cy="148.2" rx="1.75" ry="1.15" transform="rotate(-22 436.2 148.2)" fill="#111"/><text x="431.3" y="149.4" font-size="5.6" font-family="'DejaVu Sans',sans-serif" fill="#111">♭</text><path d="M448.6 149.1V156.27" stroke="#444" stroke-width=".28"/><ellipse cx="450" cy="149.1" rx="1.75" ry="1.15" transform="rotate(-22 450 149.1)" fill="#111"/><path d="M461.9 149.9V157.96" stroke="#444" stroke-width=".28"/><ellipse cx="463.3" cy="149.9" rx="1.75" ry="1.15" transform="rotate(-22 463.3 149.9)" fill="#111"/><path d="M475.7 151V158.45" stroke="#444" stroke-width=".28"/><ellipse cx="477.1" cy="151" rx="1.75" ry="1.15" transform="rotate(-22 477.1 151)" fill="#111"/><path d="M489.2 152.1V160.19" stroke="#444" stroke-width=".28"/><ellipse cx="490.6" cy="152.1" rx="1.75" ry="1.15" transform="rotate(-22 490.6 152.1)" fill="#111"/><path d="M503 153.3V160.55" stroke="#444" stroke-width=".28"/><ellipse cx="504.4" cy="153.3" rx="1.75" ry="1.15" transform="rotate(-22 504.4 153.3)" fill="#111"/><path d="M516.7 154.2V162.31" stroke="#444" stroke-width=".28"/><ellipse cx="518.1" cy="154.2" rx="1.75" ry="1.15" transform="rotate(-22 518.1 154.2)" fill="#111"/><rect x="288.15" y="175.77" width="2.7" height="2.2" fill="#fff"/><text x="289.5" y="178.17" font-size="3.7" text-anchor="middle" font-family="'Liberation Sans',sans-serif" fill="#383838">8</text><rect x="302.3" y="175.77" width="4.6" height="2.2" fill="#fff"/><text x="304.6" y="178.17" font-size="3.7" text-anchor="middle" font-family="'Liberation Sans',sans-serif" fill="#383838">10</text><rect x="318.65" y="172.43" width="2.7" height="2.2" fill="#fff"/><text x="320" y="174.83" font-size="3.7" text-anchor="middle" font-family="'Liberation Sans',sans-serif" fill="#383838">7</text><rect x="333.55" y="172.43" width="2.7" height="2.2" fill="#fff"/><text x="334.9" y="174.83" font-size="3.7" text-anchor="middle" font-family="'Liberation Sans',sans-serif" fill="#383838">8</text><rect x="348.2" y="172.43" width="4.6" height="2.2" fill="#fff"/><text x="350.5" y="174.83" font-size="3.7" text-anchor="middle" font-family="'Liberation Sans',sans-serif" fill="#383838">10</text><rect x="364.55" y="169.1" width="2.7" height="2.2" fill="#fff"/><text x="365.9" y="171.5" font-size="3.7" text-anchor="middle" font-family="'Liberation Sans',sans-serif" fill="#383838">7</text><rect x="379.45" y="169.1" width="2.7" height="2.2" fill="#fff"/><text x="380.8" y="171.5" font-size="3.7" text-anchor="middle" font-family="'Liberation Sans',sans-serif" fill="#383838">8</text><rect x="394.5" y="169.1" width="4.6" height="2.2" fill="#fff"/><text x="396.8" y="171.5" font-size="3.7" text-anchor="middle" font-family="'Liberation Sans',sans-serif" fill="#383838">10</text><rect x="420.4" y="169.1" width="4.6" height="2.2" fill="#fff"/><text x="422.7" y="171.5" font-size="3.7" text-anchor="middle" font-family="'Liberation Sans',sans-serif" fill="#383838">10</text><rect x="434.85" y="169.1" width="2.7" height="2.2" fill="#fff"/><text x="436.2" y="171.5" font-size="3.7" text-anchor="middle" font-family="'Liberation Sans',sans-serif" fill="#383838">8</text><rect x="448.65" y="169.1" width="2.7" height="2.2" fill="#fff"/><text x="450" y="171.5" font-size="3.7" text-anchor="middle" font-family="'Liberation Sans',sans-serif" fill="#383838">7</text><rect x="461" y="172.43" width="4.6" height="2.2" fill="#fff"/><text x="463.3" y="174.83" font-size="3.7" text-anchor="middle" font-family="'Liberation Sans',sans-serif" fill="#383838">10</text><rect x="475.75" y="172.43" width="2.7" height="2.2" fill="#fff"/><text x="477.1" y="174.83" font-size="3.7" text-anchor="middle" font-family="'Liberation Sans',sans-serif" fill="#383838">8</text><rect x="489.25" y="172.43" width="2.7" height="2.2" fill="#fff"/><text x="490.6" y="174.83" font-size="3.7" text-anchor="middle" font-family="'Liberation Sans',sans-serif" fill="#383838">7</text><rect x="502.1" y="175.77" width="4.6" height="2.2" fill="#fff"/><text x="504.4" y="178.17" font-size="3.7" text-anchor="middle" font-family="'Liberation Sans',sans-serif" fill="#383838">10</text><rect x="516.75" y="175.77" width="2.7" height="2.2" fill="#fff"/><text x="518.1" y="178.17" font-size="3.7" text-anchor="middle" font-family="'Liberation Sans',sans-serif" fill="#383838">8</text><path d="M258 202.2H539" stroke="#8c8c8c" stroke-width=".32"/><path d="M258 204.32H539" stroke="#8c8c8c" stroke-width=".32"/><path d="M258 206.45H539" stroke="#8c8c8c" stroke-width=".32"/><path d="M258 208.57H539" stroke="#8c8c8c" stroke-width=".32"/><path d="M258 210.7H539" stroke="#8c8c8c" stroke-width=".32"/><path d="M258 220.3H539" stroke="#8c8c8c" stroke-width=".32"/><path d="M258 223.63H539" stroke="#8c8c8c" stroke-width=".32"/><path d="M258 226.97H539" stroke="#8c8c8c" stroke-width=".32"/><path d="M258 230.3H539" stroke="#8c8c8c" stroke-width=".32"/><path d="M258 202.200V232" stroke="#333" stroke-width=".35"/><path d="M257.400 199.300C256.300 200.100 256.500 200.600 256.500 201.600V232" fill="none" stroke="#111" stroke-width=".9"/><path d="M270.800 202.2V210.7" stroke="#111" stroke-width="1.8"/><path d="M272.500 202.2V210.7" stroke="#111" stroke-width=".3"/><circle cx="273.500" cy="205.35" r=".4" fill="#111"/><circle cx="273.500" cy="207.55" r=".4" fill="#111"/><path d="M411.600 202.2V210.7" stroke="#333" stroke-width=".35"/><path d="M539 202.2V210.7" stroke="#111" stroke-width="1.6"/><path d="M537.300 202.2V210.7" stroke="#111" stroke-width=".3"/><path d="M270.800 220.3V230.3" stroke="#111" stroke-width="1.8"/><path d="M272.500 220.3V230.3" stroke="#111" stroke-width=".3"/><circle cx="273.500" cy="224.2" r=".4" fill="#111"/><circle cx="273.500" cy="226.4" r=".4" fill="#111"/><path d="M411.600 220.3V230.3" stroke="#333" stroke-width=".35"/><path d="M539 220.3V230.3" stroke="#111" stroke-width="1.6"/><path d="M537.300 220.3V230.3" stroke="#111" stroke-width=".3"/><circle cx="260.2" cy="204.5" r=".95" fill="#111"/><path d="M259.5 204.4C259.2 202 263 201.6 263.2 204.4C263.4 206.8 261.2 208.4 259.3 209.5" fill="none" stroke="#111" stroke-width=".85" stroke-linecap="round"/><circle cx="264.6" cy="203.3" r=".45" fill="#111"/><circle cx="264.6" cy="205.4" r=".45" fill="#111"/><path d="M279.5 211.25L295 209.15L295 210.25L279.5 212.35z" fill="#111"/><path d="M310.8 208.65L326.4 207.45L326.4 208.55L310.8 209.75z" fill="#111"/><path d="M342.4 208.05L357.8 205.95L357.8 207.05L342.4 209.15z" fill="#111"/><path d="M374.4 205.25L390.4 207.65L390.4 208.75L374.4 206.35z" fill="#111"/><path d="M416.3 208.05L431.3 210.85L431.3 211.95L416.3 209.15z" fill="#111"/><path d="M445.1 209.55L459 208.05L459 209.15L445.1 210.65z" fill="#111"/><path d="M472.9 209.15L487.8 211.65L487.8 212.75L472.9 210.25z" fill="#111"/><path d="M501.7 205.95L515.5 204.45L515.5 205.55L501.7 207.05z" fill="#111"/><path d="M279.1 204.3V211.85" stroke="#444" stroke-width=".28"/><ellipse cx="280.5" cy="204.3" rx="1.75" ry="1.15" transform="rotate(-22 280.5 204.3)" fill="#111"/><path d="M294.5 202.2V209.77" stroke="#444" stroke-width=".28"/><ellipse cx="295.9" cy="202.2" rx="1.75" ry="1.15" transform="rotate(-22 295.9 202.2)" fill="#111"/><path d="M310.7 201.1V209.21" stroke="#444" stroke-width=".28"/><ellipse cx="312.1" cy="201.1" rx="1.75" ry="1.15" transform="rotate(-22 312.1 201.1)" fill="#111"/><path d="M326.1 200.1V208.02" stroke="#444" stroke-width=".28"/><ellipse cx="327.5" cy="200.1" rx="1.75" ry="1.15" transform="rotate(-22 327.5 200.1)" fill="#111"/><path d="M342.1 201.1V208.64" stroke="#444" stroke-width=".28"/><ellipse cx="343.5" cy="201.1" rx="1.75" ry="1.15" transform="rotate(-22 343.5 201.1)" fill="#111"/><path d="M357 197.9V206.61" stroke="#444" stroke-width=".28"/><ellipse cx="358.4" cy="197.9" rx="1.75" ry="1.15" transform="rotate(-22 358.4 197.9)" fill="#111"/><text x="353.5" y="199.1" font-size="5.6" font-family="'DejaVu Sans',sans-serif" fill="#111">♭</text><path d="M373.6 199V205.68" stroke="#444" stroke-width=".28"/><ellipse cx="375" cy="199" rx="1.75" ry="1.15" transform="rotate(-22 375 199)" fill="#111"/><path d="M389.6 199.6V208.08" stroke="#444" stroke-width=".28"/><ellipse cx="391" cy="199.6" rx="1.75" ry="1.15" transform="rotate(-22 391 199.6)" fill="#111"/><path d="M416.6 196.9V208.66" stroke="#444" stroke-width=".28"/><ellipse cx="418" cy="196.9" rx="1.75" ry="1.15" transform="rotate(-22 418 196.9)" fill="#111"/><path d="M430.9 203.3V211.33" stroke="#444" stroke-width=".28"/><ellipse cx="432.3" cy="203.3" rx="1.75" ry="1.15" transform="rotate(-22 432.3 203.3)" fill="#111"/><path d="M444.8 202.2V210.13" stroke="#444" stroke-width=".28"/><ellipse cx="446.2" cy="202.2" rx="1.75" ry="1.15" transform="rotate(-22 446.2 202.2)" fill="#111"/><path d="M458.7 201.1V208.63" stroke="#444" stroke-width=".28"/><ellipse cx="460.1" cy="201.1" rx="1.75" ry="1.15" transform="rotate(-22 460.1 201.1)" fill="#111"/><path d="M473 200.1V209.72" stroke="#444" stroke-width=".28"/><ellipse cx="474.4" cy="200.1" rx="1.75" ry="1.15" transform="rotate(-22 474.4 200.1)" fill="#111"/><path d="M487.5 204.3V212.15" stroke="#444" stroke-width=".28"/><ellipse cx="488.9" cy="204.3" rx="1.75" ry="1.15" transform="rotate(-22 488.9 204.3)" fill="#111"/><path d="M501.3 198.6V206.54" stroke="#444" stroke-width=".28"/><ellipse cx="502.7" cy="198.6" rx="1.75" ry="1.15" transform="rotate(-22 502.7 198.6)" fill="#111"/><path d="M515.2 197.9V205.03" stroke="#444" stroke-width=".28"/><ellipse cx="516.6" cy="197.9" rx="1.75" ry="1.15" transform="rotate(-22 516.6 197.9)" fill="#111"/><text x="511.7" y="199.1" font-size="5.6" font-family="'DejaVu Sans',sans-serif" fill="#111">♭</text><rect x="356.7" y="219.500" width="3.400" height="1.600" fill="#fff"/><text x="358.4" y="221.250" font-size="3.7" text-anchor="middle" font-family="'Liberation Sans',sans-serif" fill="#383838">6</text><rect x="373.3" y="219.500" width="3.400" height="1.600" fill="#fff"/><text x="375" y="221.250" font-size="3.7" text-anchor="middle" font-family="'Liberation Sans',sans-serif" fill="#383838">7</text><rect x="416.3" y="219.500" width="3.400" height="1.600" fill="#fff"/><text x="418" y="221.250" font-size="3.7" text-anchor="middle" font-family="'Liberation Sans',sans-serif" fill="#383838">10</text><rect x="501" y="219.500" width="3.400" height="1.600" fill="#fff"/><text x="502.7" y="221.250" font-size="3.7" text-anchor="middle" font-family="'Liberation Sans',sans-serif" fill="#383838">7</text><rect x="514.9" y="219.500" width="3.400" height="1.600" fill="#fff"/><text x="516.6" y="221.250" font-size="3.7" text-anchor="middle" font-family="'Liberation Sans',sans-serif" fill="#383838">8</text></svg>
<div class="t" style="left:378.4px;top:937.72px;font-size:13.95px;color:#7c88a2;font-weight:700;letter-spacing:-0.07px;">Miniature video</div>
<div class="t" style="left:2562px;top:939.11px;font-size:12.65px;color:#7c88a2;font-weight:700;letter-spacing:1.05px;">16 frame</div>
<div class="a" style="left:379.2px;top:965.6px;width:122.4px;height:66.8px;background:#040506;border-radius:3.2px;"></div>
<svg class="a" style="left:421.2px;top:971.6px;width:36.8px;height:36px;overflow:visible;" viewBox="0 0 9.2 9"><path d="M.9 1C3.300 1.400 4.300 2.700 4.300 4.500C4.300 6.300 3.300 7.600 .9 8M8.300 1C5.900 1.400 4.900 2.700 4.900 4.500C4.900 6.300 5.900 7.600 8.300 8" fill="none" stroke="#fff" stroke-width="1.55" stroke-linecap="round"/></svg>
<div class="t" style="left:397.2px;top:1020.15px;font-size:8.56px;color:#9aa0a8;font-weight:700;letter-spacing:0.67px;">visual transitions</div>
<div class="t" style="left:480.99px;top:974.88px;font-size:12.28px;color:#e8e8e8;font-weight:700;letter-spacing:0px;">1</div>
<svg class="a" style="left:516.7px;top:965.6px;width:122.4px;height:66.8px;overflow:visible;" viewBox="0 0 30.6 16.7"><rect width="30.600" height="16.700" rx=".8" fill="#030405"/><g transform="translate(-1.1 -.2)"><path d="M6.900 12.800C6.400 8.600 8.600 6.300 12 5.900L16.400 5.800C18.600 6.600 19.200 9.200 18.400 12.200L17 14.600L9.500 13.800z" fill="#151d3e"/><path d="M12.500 7.500C14 8.600 15.500 8.500 16.600 7.400L16.200 9.500L13 9.700z" fill="#1c2750"/><ellipse cx="14.400" cy="4.200" rx="1.500" ry="1.850" fill="#a96c48"/><path d="M12.700 3.300C12.700 .9 16.600 .7 16.900 2.700L17.900 3.300L12.800 3.600z" fill="#161d33"/><circle cx="15.300" cy="2" r=".38" fill="#d8dce6"/><path d="M17.300 16.700C17.600 14.600 20.800 14 23.500 15.100L24 16.700z" fill="#3f5a80"/><path d="M7.400 16.200C6.600 13.800 8 11.700 10.400 11.600C12.300 11.500 13.200 12.300 14.800 12C16.200 11.800 16.600 13.200 16 14.500C15.500 15.600 15.700 16.200 16.100 16.700L8 16.700z" fill="#6e2a0e"/><path d="M8.600 16.500C8.200 14.600 9.200 13.200 10.700 13.100C12.200 13 13 13.700 14 13.600C14.300 14.600 13.800 15.700 14 16.700L8.900 16.700z" fill="#c4601a"/><ellipse cx="10.800" cy="15" rx="1.250" ry=".9" fill="#eea040"/><path d="M14.900 12L22.500 6.100L23 6.800L15.600 12.900z" fill="#b8946a"/><path d="M22.300 5.700L24 4.700L24.400 5.600L23 6.900z" fill="#caa678"/><ellipse cx="19.800" cy="9" rx="1.050" ry=".9" fill="#a96c48"/><ellipse cx="8.300" cy="12.400" rx="1.200" ry=".95" fill="#a96c48"/><path d="M17.800 7.500L19.600 8.600L18.800 10.200L17.600 10z" fill="#151d3e"/></g></svg>
<div class="t" style="left:609.5px;top:975.28px;font-size:10.04px;color:#ececec;font-weight:700;letter-spacing:0.81px;-webkit-text-stroke:0;">220</div>
<div class="a" style="left:633.1px;top:976.4px;width:6px;height:6.4px;background:#f0b232;border-radius:3.2px;"></div>
<svg class="a" style="left:654.2px;top:965.6px;width:122.4px;height:66.8px;overflow:visible;" viewBox="0 0 30.6 16.7"><rect width="30.600" height="16.700" rx=".8" fill="#030405"/><g transform="translate(-1.1 -.2)"><path d="M6.900 12.800C6.400 8.600 8.600 6.300 12 5.900L16.400 5.800C18.600 6.600 19.200 9.200 18.400 12.200L17 14.600L9.500 13.800z" fill="#151d3e"/><path d="M12.500 7.500C14 8.600 15.500 8.500 16.600 7.400L16.200 9.500L13 9.700z" fill="#1c2750"/><ellipse cx="14.400" cy="4.200" rx="1.500" ry="1.850" fill="#a96c48"/><path d="M12.700 3.300C12.700 .9 16.600 .7 16.900 2.700L17.900 3.300L12.800 3.600z" fill="#161d33"/><circle cx="15.300" cy="2" r=".38" fill="#d8dce6"/><path d="M17.300 16.700C17.600 14.600 20.800 14 23.500 15.100L24 16.700z" fill="#3f5a80"/><path d="M7.400 16.200C6.600 13.800 8 11.700 10.400 11.600C12.300 11.500 13.200 12.300 14.800 12C16.200 11.800 16.600 13.200 16 14.500C15.500 15.600 15.700 16.200 16.100 16.700L8 16.700z" fill="#6e2a0e"/><path d="M8.600 16.500C8.200 14.600 9.200 13.200 10.700 13.100C12.200 13 13 13.700 14 13.600C14.300 14.600 13.800 15.700 14 16.700L8.900 16.700z" fill="#c4601a"/><ellipse cx="10.800" cy="15" rx="1.250" ry=".9" fill="#eea040"/><path d="M14.900 12L22.500 6.100L23 6.800L15.600 12.900z" fill="#b8946a"/><path d="M22.300 5.700L24 4.700L24.400 5.600L23 6.900z" fill="#caa678"/><ellipse cx="19.800" cy="9" rx="1.050" ry=".9" fill="#a96c48"/><ellipse cx="8.300" cy="12.400" rx="1.200" ry=".95" fill="#a96c48"/><path d="M17.800 7.500L19.600 8.600L18.800 10.200L17.600 10z" fill="#151d3e"/></g></svg>
<div class="t" style="left:747px;top:975.28px;font-size:10.04px;color:#ececec;font-weight:700;letter-spacing:0.81px;-webkit-text-stroke:0;">440</div>
<div class="a" style="left:770.6px;top:976.4px;width:6px;height:6.4px;background:#f0b232;border-radius:3.2px;"></div>
<svg class="a" style="left:791.7px;top:965.6px;width:122.4px;height:66.8px;overflow:visible;" viewBox="0 0 30.6 16.7"><rect width="30.600" height="16.700" rx=".8" fill="#030405"/><g transform="translate(-1.1 -.2)"><path d="M6.900 12.800C6.400 8.600 8.600 6.300 12 5.900L16.400 5.800C18.600 6.600 19.200 9.200 18.400 12.200L17 14.600L9.500 13.800z" fill="#151d3e"/><path d="M12.500 7.500C14 8.600 15.500 8.500 16.600 7.400L16.200 9.500L13 9.700z" fill="#1c2750"/><ellipse cx="14.400" cy="4.200" rx="1.500" ry="1.850" fill="#a96c48"/><path d="M12.700 3.300C12.700 .9 16.600 .7 16.900 2.700L17.900 3.300L12.800 3.600z" fill="#161d33"/><circle cx="15.300" cy="2" r=".38" fill="#d8dce6"/><path d="M17.300 16.700C17.600 14.600 20.800 14 23.500 15.100L24 16.700z" fill="#3f5a80"/><path d="M7.400 16.200C6.600 13.800 8 11.700 10.400 11.600C12.300 11.500 13.200 12.300 14.800 12C16.200 11.800 16.600 13.200 16 14.500C15.500 15.600 15.700 16.200 16.100 16.700L8 16.700z" fill="#6e2a0e"/><path d="M8.600 16.500C8.200 14.600 9.200 13.200 10.700 13.100C12.200 13 13 13.700 14 13.600C14.300 14.600 13.800 15.700 14 16.700L8.900 16.700z" fill="#c4601a"/><ellipse cx="10.800" cy="15" rx="1.250" ry=".9" fill="#eea040"/><path d="M14.900 12L22.500 6.100L23 6.800L15.600 12.900z" fill="#b8946a"/><path d="M22.300 5.700L24 4.700L24.400 5.600L23 6.900z" fill="#caa678"/><ellipse cx="19.800" cy="9" rx="1.050" ry=".9" fill="#a96c48"/><ellipse cx="8.300" cy="12.400" rx="1.200" ry=".95" fill="#a96c48"/><path d="M17.800 7.500L19.600 8.600L18.800 10.200L17.600 10z" fill="#151d3e"/></g></svg>
<div class="t" style="left:884.5px;top:975.28px;font-size:10.04px;color:#ececec;font-weight:700;letter-spacing:0.81px;-webkit-text-stroke:0;">673</div>
<div class="a" style="left:908.1px;top:976.4px;width:6px;height:6.4px;background:#f0b232;border-radius:3.2px;"></div>
<div class="a" style="left:925.2px;top:961.6px;width:130.4px;height:74.8px;background:#0d1a33;border-radius:6.4px;box-shadow:inset 0 0 0 2.2px #3b82f6;"></div>
<svg class="a" style="left:929.2px;top:965.6px;width:122.4px;height:66.8px;overflow:visible;" viewBox="0 0 30.6 16.7"><rect width="30.600" height="16.700" rx=".8" fill="#030405"/><g transform="translate(-1.1 -.2)"><path d="M6.900 12.800C6.400 8.600 8.600 6.300 12 5.900L16.400 5.800C18.600 6.600 19.200 9.200 18.400 12.200L17 14.600L9.500 13.800z" fill="#151d3e"/><path d="M12.500 7.500C14 8.600 15.500 8.500 16.600 7.400L16.200 9.500L13 9.700z" fill="#1c2750"/><ellipse cx="14.400" cy="4.200" rx="1.500" ry="1.850" fill="#a96c48"/><path d="M12.700 3.300C12.700 .9 16.600 .7 16.900 2.700L17.900 3.300L12.800 3.600z" fill="#161d33"/><circle cx="15.300" cy="2" r=".38" fill="#d8dce6"/><path d="M17.300 16.700C17.600 14.600 20.800 14 23.500 15.100L24 16.700z" fill="#3f5a80"/><path d="M7.400 16.200C6.600 13.800 8 11.700 10.400 11.600C12.300 11.500 13.200 12.300 14.800 12C16.200 11.800 16.600 13.200 16 14.500C15.500 15.600 15.700 16.200 16.100 16.700L8 16.700z" fill="#6e2a0e"/><path d="M8.600 16.500C8.200 14.600 9.200 13.200 10.700 13.100C12.200 13 13 13.700 14 13.600C14.300 14.600 13.800 15.700 14 16.700L8.900 16.700z" fill="#c4601a"/><ellipse cx="10.800" cy="15" rx="1.250" ry=".9" fill="#eea040"/><path d="M14.900 12L22.500 6.100L23 6.800L15.600 12.900z" fill="#b8946a"/><path d="M22.300 5.700L24 4.700L24.400 5.600L23 6.900z" fill="#caa678"/><ellipse cx="19.800" cy="9" rx="1.050" ry=".9" fill="#a96c48"/><ellipse cx="8.300" cy="12.400" rx="1.200" ry=".95" fill="#a96c48"/><path d="M17.800 7.500L19.600 8.600L18.800 10.200L17.600 10z" fill="#151d3e"/></g></svg>
<div class="t" style="left:1022px;top:975.28px;font-size:10.04px;color:#ececec;font-weight:700;letter-spacing:0.81px;-webkit-text-stroke:0;">897</div>
<div class="a" style="left:1045.6px;top:976.4px;width:6px;height:6.4px;background:#f0b232;border-radius:3.2px;"></div>
<svg class="a" style="left:1066.7px;top:965.6px;width:122.4px;height:66.8px;overflow:visible;" viewBox="0 0 30.6 16.7"><rect width="30.600" height="16.700" rx=".8" fill="#030405"/><g transform="translate(-1.1 -.2)"><path d="M6.900 12.800C6.400 8.600 8.600 6.300 12 5.900L16.400 5.800C18.600 6.600 19.200 9.200 18.400 12.200L17 14.600L9.500 13.800z" fill="#151d3e"/><path d="M12.500 7.500C14 8.600 15.500 8.500 16.600 7.400L16.200 9.500L13 9.700z" fill="#1c2750"/><ellipse cx="14.400" cy="4.200" rx="1.500" ry="1.850" fill="#a96c48"/><path d="M12.700 3.300C12.700 .9 16.600 .7 16.900 2.700L17.900 3.300L12.800 3.600z" fill="#161d33"/><circle cx="15.300" cy="2" r=".38" fill="#d8dce6"/><path d="M17.300 16.700C17.600 14.600 20.800 14 23.500 15.100L24 16.700z" fill="#3f5a80"/><path d="M7.400 16.200C6.600 13.800 8 11.700 10.400 11.600C12.300 11.500 13.200 12.300 14.800 12C16.200 11.800 16.600 13.200 16 14.500C15.500 15.600 15.700 16.200 16.100 16.700L8 16.700z" fill="#6e2a0e"/><path d="M8.600 16.500C8.200 14.600 9.200 13.200 10.700 13.100C12.200 13 13 13.700 14 13.600C14.300 14.600 13.800 15.700 14 16.700L8.900 16.700z" fill="#c4601a"/><ellipse cx="10.800" cy="15" rx="1.250" ry=".9" fill="#eea040"/><path d="M14.900 12L22.500 6.100L23 6.800L15.600 12.900z" fill="#b8946a"/><path d="M22.300 5.700L24 4.700L24.400 5.600L23 6.900z" fill="#caa678"/><ellipse cx="19.800" cy="9" rx="1.050" ry=".9" fill="#a96c48"/><ellipse cx="8.300" cy="12.400" rx="1.200" ry=".95" fill="#a96c48"/><path d="M17.800 7.500L19.600 8.600L18.800 10.200L17.600 10z" fill="#151d3e"/></g></svg>
<div class="t" style="left:1153.1px;top:975.28px;font-size:10.04px;color:#ececec;font-weight:700;letter-spacing:0.95px;-webkit-text-stroke:0;">1121</div>
<div class="a" style="left:1183.1px;top:976.4px;width:6px;height:6.4px;background:#f0b232;border-radius:3.2px;"></div>
<svg class="a" style="left:1204.2px;top:965.6px;width:122.4px;height:66.8px;overflow:visible;" viewBox="0 0 30.6 16.7"><rect width="30.600" height="16.700" rx=".8" fill="#030405"/><g transform="translate(-1.1 -.2)"><path d="M6.900 12.800C6.400 8.600 8.600 6.300 12 5.900L16.400 5.800C18.600 6.600 19.200 9.200 18.400 12.200L17 14.600L9.500 13.800z" fill="#151d3e"/><path d="M12.500 7.500C14 8.600 15.500 8.500 16.600 7.400L16.200 9.500L13 9.700z" fill="#1c2750"/><ellipse cx="14.400" cy="4.200" rx="1.500" ry="1.850" fill="#a96c48"/><path d="M12.700 3.300C12.700 .9 16.600 .7 16.900 2.700L17.900 3.300L12.800 3.600z" fill="#161d33"/><circle cx="15.300" cy="2" r=".38" fill="#d8dce6"/><path d="M17.300 16.700C17.600 14.600 20.800 14 23.500 15.100L24 16.700z" fill="#3f5a80"/><path d="M7.400 16.200C6.600 13.800 8 11.700 10.400 11.600C12.300 11.500 13.200 12.300 14.800 12C16.200 11.800 16.600 13.200 16 14.500C15.500 15.600 15.700 16.200 16.100 16.700L8 16.700z" fill="#6e2a0e"/><path d="M8.600 16.500C8.200 14.600 9.200 13.200 10.700 13.100C12.200 13 13 13.700 14 13.600C14.300 14.600 13.800 15.700 14 16.700L8.900 16.700z" fill="#c4601a"/><ellipse cx="10.800" cy="15" rx="1.250" ry=".9" fill="#eea040"/><path d="M14.900 12L22.500 6.100L23 6.800L15.600 12.900z" fill="#b8946a"/><path d="M22.300 5.700L24 4.700L24.400 5.600L23 6.900z" fill="#caa678"/><ellipse cx="19.800" cy="9" rx="1.050" ry=".9" fill="#a96c48"/><ellipse cx="8.300" cy="12.400" rx="1.200" ry=".95" fill="#a96c48"/><path d="M17.800 7.500L19.600 8.600L18.800 10.200L17.600 10z" fill="#151d3e"/></g></svg>
<div class="t" style="left:1290.6px;top:975.28px;font-size:10.04px;color:#ececec;font-weight:700;letter-spacing:0.81px;-webkit-text-stroke:0;">1346</div>
<div class="a" style="left:1320.6px;top:976.4px;width:6px;height:6.4px;background:#f0b232;border-radius:3.2px;"></div>
<svg class="a" style="left:1341.7px;top:965.6px;width:122.4px;height:66.8px;overflow:visible;" viewBox="0 0 30.6 16.7"><rect width="30.600" height="16.700" rx=".8" fill="#030405"/><g transform="translate(-1.1 -.2)"><path d="M6.900 12.800C6.400 8.600 8.600 6.300 12 5.900L16.400 5.800C18.600 6.600 19.200 9.200 18.400 12.200L17 14.600L9.500 13.800z" fill="#151d3e"/><path d="M12.500 7.500C14 8.600 15.500 8.500 16.600 7.400L16.200 9.500L13 9.700z" fill="#1c2750"/><ellipse cx="14.400" cy="4.200" rx="1.500" ry="1.850" fill="#a96c48"/><path d="M12.700 3.300C12.700 .9 16.600 .7 16.900 2.700L17.900 3.300L12.800 3.600z" fill="#161d33"/><circle cx="15.300" cy="2" r=".38" fill="#d8dce6"/><path d="M17.300 16.700C17.600 14.600 20.800 14 23.500 15.100L24 16.700z" fill="#3f5a80"/><path d="M7.400 16.200C6.600 13.800 8 11.700 10.400 11.600C12.300 11.500 13.200 12.300 14.800 12C16.200 11.800 16.600 13.200 16 14.500C15.500 15.600 15.700 16.200 16.100 16.700L8 16.700z" fill="#6e2a0e"/><path d="M8.600 16.500C8.200 14.600 9.200 13.200 10.700 13.100C12.200 13 13 13.700 14 13.600C14.300 14.600 13.800 15.700 14 16.700L8.900 16.700z" fill="#c4601a"/><ellipse cx="10.800" cy="15" rx="1.250" ry=".9" fill="#eea040"/><path d="M14.900 12L22.500 6.100L23 6.800L15.600 12.900z" fill="#b8946a"/><path d="M22.300 5.700L24 4.700L24.400 5.600L23 6.900z" fill="#caa678"/><ellipse cx="19.800" cy="9" rx="1.050" ry=".9" fill="#a96c48"/><ellipse cx="8.300" cy="12.400" rx="1.200" ry=".95" fill="#a96c48"/><path d="M17.800 7.500L19.600 8.600L18.800 10.200L17.600 10z" fill="#151d3e"/></g></svg>
<div class="t" style="left:1428.1px;top:975.28px;font-size:10.04px;color:#ececec;font-weight:700;letter-spacing:0.81px;-webkit-text-stroke:0;">1570</div>
<div class="a" style="left:1458.1px;top:976.4px;width:6px;height:6.4px;background:#f0b232;border-radius:3.2px;"></div>
<svg class="a" style="left:1479.2px;top:965.6px;width:122.4px;height:66.8px;overflow:visible;" viewBox="0 0 30.6 16.7"><rect width="30.600" height="16.700" rx=".8" fill="#030405"/><g transform="translate(-1.1 -.2)"><path d="M6.900 12.800C6.400 8.600 8.600 6.300 12 5.900L16.400 5.800C18.600 6.600 19.200 9.200 18.400 12.200L17 14.600L9.500 13.800z" fill="#151d3e"/><path d="M12.500 7.500C14 8.600 15.500 8.500 16.600 7.400L16.200 9.500L13 9.700z" fill="#1c2750"/><ellipse cx="14.400" cy="4.200" rx="1.500" ry="1.850" fill="#a96c48"/><path d="M12.700 3.300C12.700 .9 16.600 .7 16.900 2.700L17.900 3.300L12.800 3.600z" fill="#161d33"/><circle cx="15.300" cy="2" r=".38" fill="#d8dce6"/><path d="M17.300 16.700C17.600 14.600 20.800 14 23.500 15.100L24 16.700z" fill="#3f5a80"/><path d="M7.400 16.200C6.600 13.800 8 11.700 10.400 11.600C12.300 11.500 13.200 12.300 14.800 12C16.200 11.800 16.600 13.200 16 14.500C15.500 15.600 15.700 16.200 16.100 16.700L8 16.700z" fill="#6e2a0e"/><path d="M8.600 16.500C8.200 14.600 9.200 13.200 10.700 13.100C12.200 13 13 13.700 14 13.600C14.300 14.600 13.800 15.700 14 16.700L8.900 16.700z" fill="#c4601a"/><ellipse cx="10.800" cy="15" rx="1.250" ry=".9" fill="#eea040"/><path d="M14.900 12L22.500 6.100L23 6.800L15.600 12.900z" fill="#b8946a"/><path d="M22.300 5.700L24 4.700L24.400 5.600L23 6.900z" fill="#caa678"/><ellipse cx="19.800" cy="9" rx="1.050" ry=".9" fill="#a96c48"/><ellipse cx="8.300" cy="12.400" rx="1.200" ry=".95" fill="#a96c48"/><path d="M17.800 7.500L19.600 8.600L18.800 10.200L17.600 10z" fill="#151d3e"/></g></svg>
<div class="t" style="left:1565.6px;top:975.28px;font-size:10.04px;color:#ececec;font-weight:700;letter-spacing:0.81px;-webkit-text-stroke:0;">1794</div>
<div class="a" style="left:1595.6px;top:976.4px;width:6px;height:6.4px;background:#f0b232;border-radius:3.2px;"></div>
<svg class="a" style="left:1616.7px;top:965.6px;width:122.4px;height:66.8px;overflow:visible;" viewBox="0 0 30.6 16.7"><rect width="30.600" height="16.700" rx=".8" fill="#030405"/><g transform="translate(-1.1 -.2)"><path d="M6.900 12.800C6.400 8.600 8.600 6.300 12 5.900L16.400 5.800C18.600 6.600 19.200 9.200 18.400 12.200L17 14.600L9.500 13.800z" fill="#151d3e"/><path d="M12.500 7.500C14 8.600 15.500 8.500 16.600 7.400L16.200 9.500L13 9.700z" fill="#1c2750"/><ellipse cx="14.400" cy="4.200" rx="1.500" ry="1.850" fill="#a96c48"/><path d="M12.700 3.300C12.700 .9 16.600 .7 16.900 2.700L17.900 3.300L12.800 3.600z" fill="#161d33"/><circle cx="15.300" cy="2" r=".38" fill="#d8dce6"/><path d="M17.300 16.700C17.600 14.600 20.800 14 23.500 15.100L24 16.700z" fill="#3f5a80"/><path d="M7.400 16.200C6.600 13.800 8 11.700 10.400 11.600C12.300 11.500 13.200 12.300 14.800 12C16.200 11.800 16.600 13.200 16 14.500C15.500 15.600 15.700 16.200 16.100 16.700L8 16.700z" fill="#6e2a0e"/><path d="M8.600 16.500C8.200 14.600 9.200 13.200 10.700 13.100C12.200 13 13 13.700 14 13.600C14.300 14.600 13.800 15.700 14 16.700L8.900 16.700z" fill="#c4601a"/><ellipse cx="10.800" cy="15" rx="1.250" ry=".9" fill="#eea040"/><path d="M14.900 12L22.500 6.100L23 6.800L15.600 12.900z" fill="#b8946a"/><path d="M22.300 5.700L24 4.700L24.400 5.600L23 6.900z" fill="#caa678"/><ellipse cx="19.800" cy="9" rx="1.050" ry=".9" fill="#a96c48"/><ellipse cx="8.300" cy="12.400" rx="1.200" ry=".95" fill="#a96c48"/><path d="M17.800 7.500L19.600 8.600L18.800 10.200L17.600 10z" fill="#151d3e"/></g></svg>
<div class="t" style="left:1703.1px;top:975.28px;font-size:10.04px;color:#ececec;font-weight:700;letter-spacing:0.81px;-webkit-text-stroke:0;">2018</div>
<div class="a" style="left:1733.1px;top:976.4px;width:6px;height:6.4px;background:#f0b232;border-radius:3.2px;"></div>
<svg class="a" style="left:1754.2px;top:965.6px;width:122.4px;height:66.8px;overflow:visible;" viewBox="0 0 30.6 16.7"><rect width="30.600" height="16.700" rx=".8" fill="#030405"/><g transform="translate(-1.1 -.2)"><path d="M6.900 12.800C6.400 8.600 8.600 6.300 12 5.900L16.400 5.800C18.600 6.600 19.200 9.200 18.400 12.200L17 14.600L9.500 13.800z" fill="#151d3e"/><path d="M12.500 7.500C14 8.600 15.500 8.500 16.600 7.400L16.200 9.500L13 9.700z" fill="#1c2750"/><ellipse cx="14.400" cy="4.200" rx="1.500" ry="1.850" fill="#a96c48"/><path d="M12.700 3.300C12.700 .9 16.600 .7 16.900 2.700L17.900 3.300L12.800 3.600z" fill="#161d33"/><circle cx="15.300" cy="2" r=".38" fill="#d8dce6"/><path d="M17.300 16.700C17.600 14.600 20.800 14 23.500 15.100L24 16.700z" fill="#3f5a80"/><path d="M7.400 16.200C6.600 13.800 8 11.700 10.400 11.600C12.300 11.500 13.200 12.300 14.800 12C16.200 11.800 16.600 13.200 16 14.500C15.500 15.600 15.700 16.200 16.100 16.700L8 16.700z" fill="#6e2a0e"/><path d="M8.600 16.500C8.200 14.600 9.200 13.200 10.700 13.100C12.200 13 13 13.700 14 13.600C14.300 14.600 13.800 15.700 14 16.700L8.900 16.700z" fill="#c4601a"/><ellipse cx="10.800" cy="15" rx="1.250" ry=".9" fill="#eea040"/><path d="M14.900 12L22.500 6.100L23 6.800L15.600 12.900z" fill="#b8946a"/><path d="M22.300 5.700L24 4.700L24.400 5.600L23 6.900z" fill="#caa678"/><ellipse cx="19.800" cy="9" rx="1.050" ry=".9" fill="#a96c48"/><ellipse cx="8.300" cy="12.400" rx="1.200" ry=".95" fill="#a96c48"/><path d="M17.800 7.500L19.600 8.600L18.800 10.200L17.600 10z" fill="#151d3e"/></g></svg>
<div class="t" style="left:1840.6px;top:975.28px;font-size:10.04px;color:#ececec;font-weight:700;letter-spacing:0.81px;-webkit-text-stroke:0;">2242</div>
<div class="a" style="left:1870.6px;top:976.4px;width:6px;height:6.4px;background:#f0b232;border-radius:3.2px;"></div>
<svg class="a" style="left:1891.7px;top:965.6px;width:122.4px;height:66.8px;overflow:visible;" viewBox="0 0 30.6 16.7"><rect width="30.600" height="16.700" rx=".8" fill="#030405"/><g transform="translate(-1.1 -.2)"><path d="M6.900 12.800C6.400 8.600 8.600 6.300 12 5.900L16.400 5.800C18.600 6.600 19.200 9.200 18.400 12.200L17 14.600L9.500 13.800z" fill="#151d3e"/><path d="M12.500 7.500C14 8.600 15.500 8.500 16.600 7.400L16.200 9.500L13 9.700z" fill="#1c2750"/><ellipse cx="14.400" cy="4.200" rx="1.500" ry="1.850" fill="#a96c48"/><path d="M12.700 3.300C12.700 .9 16.600 .7 16.900 2.700L17.900 3.300L12.800 3.600z" fill="#161d33"/><circle cx="15.300" cy="2" r=".38" fill="#d8dce6"/><path d="M17.300 16.700C17.600 14.600 20.800 14 23.500 15.100L24 16.700z" fill="#3f5a80"/><path d="M7.400 16.200C6.600 13.800 8 11.700 10.400 11.600C12.300 11.500 13.200 12.300 14.800 12C16.200 11.800 16.600 13.200 16 14.500C15.500 15.600 15.700 16.200 16.100 16.700L8 16.700z" fill="#6e2a0e"/><path d="M8.600 16.500C8.200 14.600 9.200 13.200 10.700 13.100C12.200 13 13 13.700 14 13.600C14.300 14.600 13.800 15.700 14 16.700L8.900 16.700z" fill="#c4601a"/><ellipse cx="10.800" cy="15" rx="1.250" ry=".9" fill="#eea040"/><path d="M14.900 12L22.500 6.100L23 6.800L15.600 12.900z" fill="#b8946a"/><path d="M22.300 5.700L24 4.700L24.400 5.600L23 6.900z" fill="#caa678"/><ellipse cx="19.800" cy="9" rx="1.050" ry=".9" fill="#a96c48"/><ellipse cx="8.300" cy="12.400" rx="1.200" ry=".95" fill="#a96c48"/><path d="M17.800 7.500L19.600 8.600L18.800 10.200L17.600 10z" fill="#151d3e"/></g></svg>
<div class="t" style="left:1978.1px;top:975.28px;font-size:10.04px;color:#ececec;font-weight:700;letter-spacing:0.81px;-webkit-text-stroke:0;">2466</div>
<div class="a" style="left:2008.1px;top:976.4px;width:6px;height:6.4px;background:#f0b232;border-radius:3.2px;"></div>
<svg class="a" style="left:2029.2px;top:965.6px;width:122.4px;height:66.8px;overflow:visible;" viewBox="0 0 30.6 16.7"><rect width="30.600" height="16.700" rx=".8" fill="#030405"/><g transform="translate(-1.1 -.2)"><path d="M6.900 12.800C6.400 8.600 8.600 6.300 12 5.900L16.400 5.800C18.600 6.600 19.200 9.200 18.400 12.200L17 14.600L9.500 13.800z" fill="#151d3e"/><path d="M12.500 7.500C14 8.600 15.500 8.500 16.600 7.400L16.200 9.500L13 9.700z" fill="#1c2750"/><ellipse cx="14.400" cy="4.200" rx="1.500" ry="1.850" fill="#a96c48"/><path d="M12.700 3.300C12.700 .9 16.600 .7 16.900 2.700L17.900 3.300L12.800 3.600z" fill="#161d33"/><circle cx="15.300" cy="2" r=".38" fill="#d8dce6"/><path d="M17.300 16.700C17.600 14.600 20.800 14 23.500 15.100L24 16.700z" fill="#3f5a80"/><path d="M7.400 16.200C6.600 13.800 8 11.700 10.400 11.600C12.300 11.500 13.200 12.300 14.800 12C16.200 11.800 16.600 13.200 16 14.500C15.500 15.600 15.700 16.200 16.100 16.700L8 16.700z" fill="#6e2a0e"/><path d="M8.600 16.500C8.200 14.600 9.200 13.200 10.700 13.100C12.200 13 13 13.700 14 13.600C14.300 14.600 13.800 15.700 14 16.700L8.900 16.700z" fill="#c4601a"/><ellipse cx="10.800" cy="15" rx="1.250" ry=".9" fill="#eea040"/><path d="M14.900 12L22.500 6.100L23 6.800L15.600 12.900z" fill="#b8946a"/><path d="M22.300 5.700L24 4.700L24.400 5.600L23 6.900z" fill="#caa678"/><ellipse cx="19.800" cy="9" rx="1.050" ry=".9" fill="#a96c48"/><ellipse cx="8.300" cy="12.400" rx="1.200" ry=".95" fill="#a96c48"/><path d="M17.800 7.500L19.600 8.600L18.800 10.200L17.600 10z" fill="#151d3e"/></g></svg>
<div class="t" style="left:2115.6px;top:975.28px;font-size:10.04px;color:#ececec;font-weight:700;letter-spacing:0.81px;-webkit-text-stroke:0;">2691</div>
<div class="a" style="left:2145.6px;top:976.4px;width:6px;height:6.4px;background:#f0b232;border-radius:3.2px;"></div>
<svg class="a" style="left:2166.7px;top:965.6px;width:122.4px;height:66.8px;overflow:visible;" viewBox="0 0 30.6 16.7"><rect width="30.600" height="16.700" rx=".8" fill="#030405"/><g transform="translate(-1.1 -.2)"><path d="M6.900 12.800C6.400 8.600 8.600 6.300 12 5.900L16.400 5.800C18.600 6.600 19.200 9.200 18.400 12.200L17 14.600L9.500 13.800z" fill="#151d3e"/><path d="M12.500 7.500C14 8.600 15.500 8.500 16.600 7.400L16.200 9.500L13 9.700z" fill="#1c2750"/><ellipse cx="14.400" cy="4.200" rx="1.500" ry="1.850" fill="#a96c48"/><path d="M12.700 3.300C12.700 .9 16.600 .7 16.900 2.700L17.900 3.300L12.800 3.600z" fill="#161d33"/><circle cx="15.300" cy="2" r=".38" fill="#d8dce6"/><path d="M17.300 16.700C17.600 14.600 20.800 14 23.500 15.100L24 16.700z" fill="#3f5a80"/><path d="M7.400 16.200C6.600 13.800 8 11.700 10.400 11.600C12.300 11.500 13.200 12.300 14.800 12C16.200 11.800 16.600 13.200 16 14.500C15.500 15.600 15.700 16.200 16.100 16.700L8 16.700z" fill="#6e2a0e"/><path d="M8.600 16.500C8.200 14.600 9.200 13.200 10.700 13.100C12.200 13 13 13.700 14 13.600C14.300 14.600 13.800 15.700 14 16.700L8.900 16.700z" fill="#c4601a"/><ellipse cx="10.800" cy="15" rx="1.250" ry=".9" fill="#eea040"/><path d="M14.900 12L22.500 6.100L23 6.800L15.600 12.900z" fill="#b8946a"/><path d="M22.300 5.700L24 4.700L24.400 5.600L23 6.900z" fill="#caa678"/><ellipse cx="19.800" cy="9" rx="1.050" ry=".9" fill="#a96c48"/><ellipse cx="8.300" cy="12.400" rx="1.200" ry=".95" fill="#a96c48"/><path d="M17.800 7.500L19.600 8.600L18.800 10.200L17.600 10z" fill="#151d3e"/></g></svg>
<div class="t" style="left:2253.1px;top:975.28px;font-size:10.04px;color:#ececec;font-weight:700;letter-spacing:0.81px;-webkit-text-stroke:0;">2915</div>
<div class="a" style="left:2283.1px;top:976.4px;width:6px;height:6.4px;background:#f0b232;border-radius:3.2px;"></div>
<svg class="a" style="left:2304.2px;top:965.6px;width:122.4px;height:66.8px;overflow:visible;" viewBox="0 0 30.6 16.7"><rect width="30.600" height="16.700" rx=".8" fill="#030405"/><g transform="translate(-1.1 -.2)"><path d="M6.900 12.800C6.400 8.600 8.600 6.300 12 5.900L16.400 5.800C18.600 6.600 19.200 9.200 18.400 12.200L17 14.600L9.500 13.800z" fill="#151d3e"/><path d="M12.500 7.500C14 8.600 15.500 8.500 16.600 7.400L16.200 9.500L13 9.700z" fill="#1c2750"/><ellipse cx="14.400" cy="4.200" rx="1.500" ry="1.850" fill="#a96c48"/><path d="M12.700 3.300C12.700 .9 16.600 .7 16.900 2.700L17.900 3.300L12.800 3.600z" fill="#161d33"/><circle cx="15.300" cy="2" r=".38" fill="#d8dce6"/><path d="M17.300 16.700C17.600 14.600 20.800 14 23.500 15.100L24 16.700z" fill="#3f5a80"/><path d="M7.400 16.200C6.600 13.800 8 11.700 10.400 11.600C12.300 11.500 13.200 12.300 14.800 12C16.200 11.800 16.600 13.200 16 14.500C15.500 15.600 15.700 16.200 16.100 16.700L8 16.700z" fill="#6e2a0e"/><path d="M8.600 16.500C8.200 14.600 9.200 13.200 10.700 13.100C12.200 13 13 13.700 14 13.600C14.300 14.600 13.800 15.700 14 16.700L8.900 16.700z" fill="#c4601a"/><ellipse cx="10.800" cy="15" rx="1.250" ry=".9" fill="#eea040"/><path d="M14.900 12L22.500 6.100L23 6.800L15.600 12.900z" fill="#b8946a"/><path d="M22.300 5.700L24 4.700L24.400 5.600L23 6.900z" fill="#caa678"/><ellipse cx="19.800" cy="9" rx="1.050" ry=".9" fill="#a96c48"/><ellipse cx="8.300" cy="12.400" rx="1.200" ry=".95" fill="#a96c48"/><path d="M17.800 7.500L19.600 8.600L18.800 10.200L17.600 10z" fill="#151d3e"/></g></svg>
<div class="t" style="left:2390.6px;top:975.28px;font-size:10.04px;color:#ececec;font-weight:700;letter-spacing:0.81px;-webkit-text-stroke:0;">3139</div>
<div class="a" style="left:2420.6px;top:976.4px;width:6px;height:6.4px;background:#f0b232;border-radius:3.2px;"></div>
<div class="a" style="left:2441.7px;top:965.6px;width:122.4px;height:66.8px;background:#040506;border-radius:3.2px;"></div>
<div class="t" style="left:2528.1px;top:975.28px;font-size:10.04px;color:#ececec;font-weight:700;letter-spacing:0.81px;-webkit-text-stroke:0;">3363</div>
<div class="a" style="left:375.2px;top:1052px;width:2250px;height:177.6px;background:linear-gradient(90deg,#223758,#223a5e 20%,#243b5e 60%,#263955);border-radius:12px;box-shadow:inset 0 0 0 1.2px #2a446c;"></div>
<div class="t" style="left:384.8px;top:1085.57px;font-size:13.39px;color:#e9eef6;font-weight:700;letter-spacing:1.07px;">00:14</div>
<div class="t" style="left:2570.8px;top:1085.57px;font-size:13.39px;color:#e9eef6;font-weight:700;letter-spacing:1.31px;">00:08</div>
<div class="a" style="left:479.6px;top:1086.4px;width:2039.6px;height:10.4px;background:#53657f;border-radius:5.2px;"></div>
<div class="a" style="left:479.6px;top:1086.4px;width:516.4px;height:11.2px;background:#3a80ee;border-radius:5.6px;"></div>
<div class="a" style="left:982.4px;top:1084.8px;width:26.4px;height:14.8px;background:#f3f5f8;border-radius:7.4px;box-shadow:0 0 3.2px rgba(0,0,0,.4);"></div>
<div class="a" style="left:990.4px;top:1088.8px;width:10.4px;height:6.8px;background:#c9ced8;border-radius:3.4px;"></div>
<div class="a" style="left:1693.2px;top:1070.8px;width:2.4px;height:23.6px;background:#f2902e;"></div>
<div class="a" style="left:1683.6px;top:1060px;width:21.6px;height:21.6px;background:#f2902e;border-radius:10.8px;box-shadow:0 0 4.8px #f2902e;"></div>
<div class="a" style="left:1690.4px;top:1066.8px;width:8px;height:8px;background:#7a2408;border-radius:4px;"></div>
<div class="a" style="left:1930.4px;top:1070.8px;width:2.4px;height:23.6px;background:#48dfbb;"></div>
<div class="a" style="left:1920.8px;top:1060px;width:21.6px;height:21.6px;background:#48dfbb;border-radius:10.8px;box-shadow:0 0 4.8px #48dfbb;"></div>
<div class="a" style="left:1927.6px;top:1066.8px;width:8px;height:8px;background:#17564f;border-radius:4px;"></div>
<div class="a" style="left:1695.2px;top:1117.6px;width:237.6px;height:6px;background:linear-gradient(90deg,#c08a58,#8a9a8c 50%,#4fa9a0);border-radius:2.8px;opacity:.85;"></div>
<div class="a" style="left:660.04px;top:1119.2px;width:1.76px;height:15.2px;background:#4b6186;"></div>
<div class="a" style="left:841.36px;top:1119.2px;width:1.76px;height:15.2px;background:#4b6186;"></div>
<div class="a" style="left:1022.68px;top:1119.2px;width:1.76px;height:15.2px;background:#4b6186;"></div>
<div class="a" style="left:1204px;top:1119.2px;width:1.76px;height:15.2px;background:#4b6186;"></div>
<div class="a" style="left:1385.32px;top:1119.2px;width:1.76px;height:15.2px;background:#4b6186;"></div>
<div class="a" style="left:1566.64px;top:1119.2px;width:1.76px;height:15.2px;background:#4b6186;"></div>
<div class="a" style="left:1747.96px;top:1119.2px;width:1.76px;height:15.2px;background:#4b6186;"></div>
<div class="a" style="left:1929.28px;top:1119.2px;width:1.76px;height:15.2px;background:#4b6186;"></div>
<div class="a" style="left:2110.6px;top:1119.2px;width:1.76px;height:15.2px;background:#4b6186;"></div>
<div class="a" style="left:2291.92px;top:1119.2px;width:1.76px;height:15.2px;background:#4b6186;"></div>
<div class="a" style="left:2473.24px;top:1119.2px;width:1.76px;height:15.2px;background:#4b6186;"></div>
<div class="a" style="left:479.6px;top:1132.8px;width:2135.2px;height:43.2px;background:rgba(70,98,140,.28);border-radius:6.4px;"></div>
<div class="t" style="left:495.2px;top:1148.24px;font-size:11.9px;color:#8ea0bd;letter-spacing:0.46px;">– —</div>
<div class="t" style="left:492px;top:1195.82px;font-size:12.83px;color:#9fb0ca;font-weight:700;letter-spacing:1.05px;">Normale · Durata loop: 00:08.554</div>
<div class="a" style="left:2372px;top:1190.4px;width:156px;height:24.4px;background:#2a4163;border-radius:12.2px;box-shadow:inset 0 0 0 1.6px #7186a6;"></div>
<svg class="a" style="left:2384.8px;top:1195.2px;width:14.4px;height:14.4px;overflow:visible;opacity:0.88;" viewBox="0 0 24 24"><circle cx="12" cy="12" r="8" fill="none" stroke="#c9d3e3" stroke-width="2.6"/><path d="M10 8.500l5.500 3.500-5.500 3.500z" fill="#c9d3e3"/></svg>
<div class="t" style="left:2405.2px;top:1196.96px;font-size:12.09px;color:#e3e9f3;font-weight:700;letter-spacing:0.14px;">Playback Originale</div>
<div class="a" style="left:2540px;top:1190.4px;width:55.2px;height:24px;background:#324968;border-radius:12px;"></div>
<div class="a" style="left:2542px;top:1192px;width:36px;height:20.8px;background:#f4f6f9;border-radius:10.4px;"></div>
<div class="a" style="left:2552px;top:1198px;width:16px;height:8.8px;background:#d5dae3;border-radius:4.4px;"></div>
<div class="a" style="left:376px;top:1243.6px;width:2249.2px;height:60.4px;background:linear-gradient(90deg,#223758,#223a5e 20%,#243b5e 60%,#263955);border-radius:12px;box-shadow:inset 0 0 0 1.2px #2a446c;"></div>
<div class="a" style="left:395.2px;top:1258.8px;width:48px;height:29.2px;background:#2f7bf2;border-radius:6.4px;box-shadow:0 0 4.8px rgba(47,123,242,.45);"></div>
<svg class="a" style="left:410.8px;top:1264.6px;width:17.6px;height:17.6px;overflow:visible;opacity:0.88;" viewBox="0 0 24 24"><path d="M7 4.500l13 7.500-13 7.500z" fill="#fff"/></svg>
<div class="a" style="left:452.8px;top:1258.8px;width:46.8px;height:29.2px;background:#395074;border-radius:6.4px;box-shadow:inset 0 0 0 1.2px #496189;"></div>
<svg class="a" style="left:468.2px;top:1265.4px;width:16px;height:16px;overflow:visible;opacity:0.88;" viewBox="0 0 24 24"><path d="M8 5v14M16 5v14" stroke="#f4f6fa" stroke-width="4"/></svg>
<div class="a" style="left:508.4px;top:1258.8px;width:46.8px;height:29.2px;background:#395074;border-radius:6.4px;box-shadow:inset 0 0 0 1.2px #496189;"></div>
<svg class="a" style="left:523.8px;top:1265.4px;width:16px;height:16px;overflow:visible;opacity:0.88;" viewBox="0 0 24 24"><rect x="5" y="5" width="14" height="14" rx="1.500" fill="#f1f4f9"/></svg>
<div class="a" style="left:564.8px;top:1258.8px;width:48px;height:29.2px;background:#395074;border-radius:6.4px;box-shadow:inset 0 0 0 1.2px #496189;"></div>
<svg class="a" style="left:580px;top:1264.6px;width:17.6px;height:17.6px;overflow:visible;opacity:0.88;" viewBox="0 0 24 24"><path d="M3 5l9 7-9 7zM12 5l9 7-9 7z" fill="#f1f4f9"/><path d="M12 5v14" stroke="#f1f4f9" stroke-width="2"/></svg>
<div class="a" style="left:621.6px;top:1258.8px;width:48.4px;height:29.2px;background:#395074;border-radius:6.4px;box-shadow:inset 0 0 0 1.2px #496189;"></div>
<svg class="a" style="left:637px;top:1264.6px;width:17.6px;height:17.6px;overflow:visible;opacity:0.88;" viewBox="0 0 24 24"><path d="M5 5l11 7-11 7z" fill="#f1f4f9"/><path d="M18 5v14" stroke="#f1f4f9" stroke-width="3"/></svg>
<div class="a" style="left:678.8px;top:1258.8px;width:47.2px;height:29.2px;background:#2b4265;border-radius:6.4px;box-shadow:inset 0 0 0 1.2px #36507a;"></div>
<svg class="a" style="left:693.6px;top:1264.6px;width:17.6px;height:17.6px;overflow:visible;opacity:0.88;" viewBox="0 0 24 24"><circle cx="12" cy="12" r="7.500" fill="none" stroke="#6f83a4" stroke-width="2.4"/><circle cx="12" cy="12" r="2.500" fill="#6f83a4"/></svg>
<div class="a" style="left:735.6px;top:1258.8px;width:46.8px;height:29.2px;background:#2b4265;border-radius:6.4px;box-shadow:inset 0 0 0 1.2px #36507a;"></div>
<svg class="a" style="left:750.2px;top:1264.6px;width:17.6px;height:17.6px;overflow:visible;opacity:0.88;" viewBox="0 0 24 24"><circle cx="12" cy="13" r="7" fill="none" stroke="#6f83a4" stroke-width="2.4"/><path d="M12 13V8M9.500 3h5" stroke="#6f83a4" stroke-width="2.2"/></svg>
<div class="a" style="left:805.2px;top:1256.4px;width:134.8px;height:34.4px;background:#2c4467;border-radius:17.2px;box-shadow:inset 0 0 0 1.2px #3b547b;"></div>
<div class="t" style="left:817.2px;top:1265.7px;font-size:17.11px;color:#f1f4f9;letter-spacing:0.09px;-webkit-text-stroke:.55px currentColor;">Muta</div>
<div class="a" style="left:868px;top:1259.6px;width:68px;height:28px;background:#4a5f81;border-radius:14px;"></div>
<div class="a" style="left:869.6px;top:1260.4px;width:46px;height:26.4px;background:#f4f6f9;border-radius:13.2px;box-shadow:0 0 2.4px rgba(0,0,0,.35);"></div>
<div class="a" style="left:883.4px;top:1268.4px;width:18.4px;height:10.4px;background:#dde1e8;border-radius:5.2px;"></div>
<svg class="a" style="left:953.2px;top:1263.4px;width:20px;height:20px;overflow:visible;opacity:0.88;" viewBox="0 0 24 24"><path d="M2 9h5.500l7.500-6v18l-7.500-6H2z" fill="#f4f6fa"/></svg>
<div class="a" style="left:978.4px;top:1268px;width:134.4px;height:10.8px;background:#3576e0;border-radius:5.2px;"></div>
<div class="a" style="left:1100px;top:1261.6px;width:28.8px;height:23.6px;background:#f4f6f9;border-radius:11.8px;box-shadow:0 0 2.4px rgba(0,0,0,.35);"></div>
<div class="a" style="left:1108px;top:1268.8px;width:12.8px;height:9.2px;background:#dde1e8;border-radius:4.6px;"></div>
<div class="t" style="left:1146px;top:1267.54px;font-size:13.02px;color:#e6ebf3;font-weight:700;letter-spacing:0.22px;">Pan  L</div>
<div class="a" style="left:1196px;top:1269.2px;width:160px;height:8.4px;background:#50627f;border-radius:4.2px;"></div>
<div class="a" style="left:1196px;top:1268px;width:80px;height:10.8px;background:#3576e0;border-radius:5.2px;"></div>
<div class="a" style="left:1262.4px;top:1261.6px;width:28.8px;height:23.6px;background:#f4f6f9;border-radius:11.8px;box-shadow:0 0 2.4px rgba(0,0,0,.35);"></div>
<div class="a" style="left:1270.4px;top:1268.8px;width:12.8px;height:9.2px;background:#dde1e8;border-radius:4.6px;"></div>
<div class="t" style="left:1364.5px;top:1267.54px;font-size:13.02px;color:#e6ebf3;font-weight:700;letter-spacing:0px;">R</div>
<div class="t" style="left:1409.2px;top:1267.71px;font-size:12.65px;color:#e6ebf3;font-weight:700;letter-spacing:1.39px;">+0</div>
<div class="a" style="left:1441.2px;top:1260.2px;width:26.4px;height:26.4px;background:#f0f3f8;border-radius:13.2px;"></div>
<div class="a" style="left:1447.6px;top:1266.6px;width:13.6px;height:14.4px;background:#25344f;border-radius:6.8px;"></div>
<div class="a" style="left:1450.4px;top:1272px;width:8px;height:2.8px;background:#f0f3f8;"></div>
<div class="a" style="left:1498.4px;top:1255.6px;width:325.6px;height:35.2px;background:#2a4265;border-radius:8.8px;box-shadow:inset 0 0 0 1.2px #334b72;"></div>
<div class="a" style="left:1508px;top:1259.2px;width:107.6px;height:27.2px;background:#395074;border-radius:6.4px;box-shadow:inset 0 0 0 1.2px #496189;"></div>
<svg class="a" style="left:1518.8px;top:1265.8px;width:15.2px;height:15.2px;overflow:visible;opacity:0.88;" viewBox="0 0 24 24"><path d="M4 10V4h6M20 14v6h-6M4 4l6 6M20 20l-6-6" fill="none" stroke="#e9edf4" stroke-width="2.4"/></svg>
<div class="t" style="left:1544.8px;top:1267.54px;font-size:13.02px;color:#eef2f8;font-weight:700;letter-spacing:1.62px;">PDF FS</div>
<div class="a" style="left:1625.6px;top:1259.2px;width:93.2px;height:27.2px;background:#395074;border-radius:6.4px;box-shadow:inset 0 0 0 1.2px #496189;"></div>
<svg class="a" style="left:1636.8px;top:1265.4px;width:16px;height:16px;overflow:visible;opacity:0.88;" viewBox="0 0 24 24"><rect x="3" y="5" width="18" height="14" rx="2" fill="none" stroke="#e9edf4" stroke-width="2.4"/><path d="M8 5v14M16 5v14" stroke="#e9edf4" stroke-width="1.800"/></svg>
<div class="t" style="left:1665.6px;top:1267.54px;font-size:13.02px;color:#eef2f8;font-weight:700;letter-spacing:1.76px;">Video</div>
<div class="a" style="left:1729.6px;top:1259.2px;width:88px;height:27.2px;background:#2b7af4;border-radius:6.4px;"></div>
<svg class="a" style="left:1743.6px;top:1265.8px;width:15.2px;height:15.2px;overflow:visible;opacity:0.88;" viewBox="0 0 24 24"><rect x="6" y="3" width="12" height="18" rx="2" fill="none" stroke="#fff" stroke-width="2.4"/><path d="M9 9h6M9 13h6" stroke="#fff" stroke-width="1.800"/></svg>
<div class="t" style="left:1768.8px;top:1267.54px;font-size:13.02px;color:#ffffff;font-weight:700;letter-spacing:2.52px;">PDF</div>
<div class="a" style="left:376px;top:1314.8px;width:2249.2px;height:107.6px;background:linear-gradient(90deg,#223758,#223a5e 20%,#243b5e 60%,#263955);border-radius:12px;box-shadow:inset 0 0 0 1.2px #2a446c;"></div>
<div class="a" style="left:385.6px;top:1329.6px;width:457.6px;height:37.2px;background:#2a4164;border-radius:8.8px;box-shadow:inset 0 0 0 1.2px #38517a;"></div>
<svg class="a" style="left:395.2px;top:1340px;width:16.8px;height:16.8px;overflow:visible;opacity:0.88;" viewBox="0 0 24 24"><path d="M5 11V9a3 3 0 013-3h11l-3-3M19 13v2a3 3 0 01-3 3H5l3 3" fill="none" stroke="#aebcd2" stroke-width="2.4"/></svg>
<div class="t" style="left:424px;top:1342.37px;font-size:13.39px;color:#eef2f8;font-weight:700;letter-spacing:0.93px;">Loop A-B</div>
<div class="a" style="left:508.4px;top:1336px;width:36.8px;height:24.8px;background:#2f476b;border-radius:6.4px;box-shadow:inset 0 0 0 1.2px #3a5379;"></div>
<div class="t" style="left:522.23px;top:1342.71px;font-size:12.65px;color:#7389aa;font-weight:700;letter-spacing:-0px;">A</div>
<div class="a" style="left:555.2px;top:1336px;width:35.2px;height:24.8px;background:#2f476b;border-radius:6.4px;box-shadow:inset 0 0 0 1.2px #3a5379;"></div>
<div class="t" style="left:568.23px;top:1342.71px;font-size:12.65px;color:#7389aa;font-weight:700;letter-spacing:-0px;">B</div>
<div class="a" style="left:603.2px;top:1336px;width:124.8px;height:24.8px;background:#2f476b;border-radius:6.4px;box-shadow:inset 0 0 0 1.2px #3a5379;"></div>
<svg class="a" style="left:615.6px;top:1341.6px;width:13.6px;height:13.6px;overflow:visible;opacity:0.88;" viewBox="0 0 24 24"><circle cx="12" cy="12" r="7.500" fill="none" stroke="#6b81a3" stroke-width="2.4"/></svg>
<div class="t" style="left:643.6px;top:1342.54px;font-size:13.02px;color:#7389aa;font-weight:700;letter-spacing:0.52px;">Loop OFF</div>
<div class="a" style="left:737.6px;top:1336px;width:92.8px;height:24.8px;background:#2f476b;border-radius:6.4px;box-shadow:inset 0 0 0 1.2px #3a5379;"></div>
<div class="t" style="left:752.8px;top:1342.71px;font-size:12.65px;color:#7389aa;font-weight:700;letter-spacing:0.58px;">Reset A-B</div>
<div class="a" style="left:862px;top:1329.2px;width:214px;height:38.4px;background:#2c4467;border-radius:17.2px;box-shadow:inset 0 0 0 1.2px #3b547b;"></div>
<div class="t" style="left:871.6px;top:1340.45px;font-size:17.67px;color:#f1f4f9;letter-spacing:0.06px;-webkit-text-stroke:.55px currentColor;">Snap transienti</div>
<div class="a" style="left:1003.6px;top:1334.4px;width:67.6px;height:28px;background:#4a5f81;border-radius:14px;"></div>
<div class="a" style="left:1005.2px;top:1335.2px;width:44.8px;height:26.4px;background:#f4f6f9;border-radius:13.2px;box-shadow:0 0 2.4px rgba(0,0,0,.35);"></div>
<div class="a" style="left:1018.4px;top:1343.2px;width:18.4px;height:10.4px;background:#dde1e8;border-radius:5.2px;"></div>
<div class="a" style="left:1081.6px;top:1329.2px;width:195.2px;height:38.4px;background:#2c4467;border-radius:17.2px;box-shadow:inset 0 0 0 1.2px #3b547b;"></div>
<div class="t" style="left:1091.6px;top:1340.45px;font-size:17.67px;color:#f1f4f9;letter-spacing:-0.07px;-webkit-text-stroke:.55px currentColor;">Loop Media</div>
<div class="a" style="left:1196.8px;top:1334.4px;width:67.2px;height:28px;background:#4a5f81;border-radius:14px;"></div>
<div class="a" style="left:1198.4px;top:1335.2px;width:44px;height:26.4px;background:#f4f6f9;border-radius:13.2px;box-shadow:0 0 2.4px rgba(0,0,0,.35);"></div>
<div class="a" style="left:1211.2px;top:1343.2px;width:18.4px;height:10.4px;background:#dde1e8;border-radius:5.2px;"></div>
<div class="a" style="left:1295.6px;top:1332px;width:443.6px;height:35.6px;background:#2a4164;border-radius:8.8px;box-shadow:inset 0 0 0 1.2px #38517a;"></div>
<svg class="a" style="left:1303.6px;top:1340.4px;width:16px;height:16px;overflow:visible;opacity:0.88;" viewBox="0 0 24 24"><path d="M5 18v-6a7 7 0 0114 0v6" fill="none" stroke="#c5d0e2" stroke-width="2.4"/><rect x="3.500" y="14" width="4" height="6" rx="1" fill="#c5d0e2"/><rect x="16.500" y="14" width="4" height="6" rx="1" fill="#c5d0e2"/></svg>
<div class="t" style="left:1329.6px;top:1342.71px;font-size:12.65px;color:#eef2f8;font-weight:700;letter-spacing:0.88px;">Preview</div>
<div class="a" style="left:1396px;top:1336px;width:75.2px;height:25.6px;background:#395074;border-radius:6.4px;box-shadow:inset 0 0 0 1.2px #496189;"></div>
<svg class="a" style="left:1406.4px;top:1340.4px;width:16px;height:16px;overflow:visible;opacity:0.88;" viewBox="0 0 24 24"><path d="M21 5l-9 7 9 7zM12 5l-9 7 9 7z" fill="#f1f4f9"/></svg>
<div class="t" style="left:1437.36px;top:1342.54px;font-size:13.02px;color:#e6ebf3;font-weight:700;letter-spacing:0.47px;">-10</div>
<div class="a" style="left:1484px;top:1336px;width:66px;height:25.6px;background:#395074;border-radius:6.4px;box-shadow:inset 0 0 0 1.2px #496189;"></div>
<svg class="a" style="left:1496px;top:1342px;width:12.8px;height:12.8px;overflow:visible;opacity:0.88;" viewBox="0 0 24 24"><path d="M17 5l-10 7 10 7z" fill="#8d9fbb"/></svg>
<div class="t" style="left:1523.95px;top:1342.54px;font-size:13.02px;color:#c3cee0;font-weight:700;letter-spacing:0.44px;">-1</div>
<div class="a" style="left:1565.2px;top:1336px;width:68.4px;height:25.6px;background:#395074;border-radius:6.4px;box-shadow:inset 0 0 0 1.2px #496189;"></div>
<svg class="a" style="left:1577.2px;top:1342px;width:12.8px;height:12.8px;overflow:visible;opacity:0.88;" viewBox="0 0 24 24"><path d="M7 5l10 7-10 7z" fill="#8d9fbb"/></svg>
<div class="t" style="left:1604.04px;top:1342.54px;font-size:13.02px;color:#c3cee0;font-weight:700;letter-spacing:0.56px;">+1</div>
<div class="a" style="left:1646.4px;top:1336px;width:78.4px;height:25.6px;background:#395074;border-radius:6.4px;box-shadow:inset 0 0 0 1.2px #496189;"></div>
<svg class="a" style="left:1656.8px;top:1340.4px;width:16px;height:16px;overflow:visible;opacity:0.88;" viewBox="0 0 24 24"><path d="M3 5l9 7-9 7zM12 5l9 7-9 7z" fill="#f1f4f9"/></svg>
<div class="t" style="left:1687.45px;top:1342.54px;font-size:13.02px;color:#e6ebf3;font-weight:700;letter-spacing:0.55px;">+10</div>
<div class="t" style="left:388.23px;top:1390.71px;font-size:12.65px;color:#c7d2e4;font-weight:700;letter-spacing:-0px;">A</div>
<div class="a" style="left:408px;top:1384px;width:128px;height:25.6px;background:#171b27;border-radius:5.6px;box-shadow:inset 0 0 0 1.2px #2a3145;"></div>
<div class="t" style="left:418.4px;top:1390.88px;font-size:12.28px;color:#6e4a3c;letter-spacing:1.84px;">00:09.003</div>
<div class="a" style="left:552px;top:1384.8px;width:55.2px;height:24px;background:#2d4568;border-radius:6.4px;box-shadow:inset 0 0 0 1.2px #38517a;"></div>
<div class="t" style="left:559.2px;top:1391.21px;font-size:11.53px;color:#6d83a5;font-weight:700;letter-spacing:-0.75px;">Modifica</div>
<div class="t" style="left:623.2px;top:1389.87px;font-size:14.51px;color:#7d92b3;font-weight:700;letter-spacing:1.1px;">Nudge A</div>
<svg class="a" style="left:695.2px;top:1390px;width:14.4px;height:14.4px;overflow:visible;opacity:0.88;" viewBox="0 0 24 24"><path d="M4 8l8 9 8-9z" fill="#8ea2c0"/></svg>
<div class="t" style="left:733.83px;top:1390.71px;font-size:12.65px;color:#c7d2e4;font-weight:700;letter-spacing:-0px;">B</div>
<div class="a" style="left:750.4px;top:1384px;width:128.8px;height:25.6px;background:#171b27;border-radius:5.6px;box-shadow:inset 0 0 0 1.2px #2a3145;"></div>
<div class="t" style="left:760.8px;top:1390.88px;font-size:12.28px;color:#6e4a3c;letter-spacing:1.93px;">00:09.957</div>
<div class="a" style="left:895.2px;top:1384.8px;width:55.2px;height:24px;background:#2d4568;border-radius:6.4px;box-shadow:inset 0 0 0 1.2px #38517a;"></div>
<div class="t" style="left:902.4px;top:1391.21px;font-size:11.53px;color:#6d83a5;font-weight:700;letter-spacing:-0.75px;">Modifica</div>
<div class="t" style="left:967.6px;top:1389.87px;font-size:14.51px;color:#7d92b3;font-weight:700;letter-spacing:1.14px;">Nudge B</div>
<svg class="a" style="left:1040px;top:1390px;width:14.4px;height:14.4px;overflow:visible;opacity:0.88;" viewBox="0 0 24 24"><path d="M4 8l8 9 8-9z" fill="#8ea2c0"/></svg>
<div class="a" style="left:1077.6px;top:1385.2px;width:71.2px;height:21.6px;background:#50402f;border-radius:5.2px;box-shadow:inset 0 0 0 1.2px #8a5a2a,0 0 4.8px rgba(240,140,40,.35);"></div>
<div class="t" style="left:1088px;top:1391.04px;font-size:11.9px;color:#f3a550;font-weight:700;letter-spacing:1.21px;">A 00:23</div>
<div class="a" style="left:1166px;top:1385.2px;width:71.6px;height:21.6px;background:#1f5a5c;border-radius:5.2px;box-shadow:inset 0 0 0 1.2px #2b8a7e;"></div>
<div class="t" style="left:1176.8px;top:1391.04px;font-size:11.9px;color:#4fe0bb;font-weight:700;letter-spacing:1.21px;">B 00:40</div>
<div class="t" style="left:1252.8px;top:1390.88px;font-size:12.28px;color:#d6deea;font-weight:700;letter-spacing:0.6px;">Snap OFF</div>
<svg class="a" style="left:1332px;top:1390px;width:12.8px;height:12.8px;overflow:visible;opacity:0.88;" viewBox="0 0 24 24"><circle cx="12" cy="12" r="7" fill="none" stroke="#9fb0ca" stroke-width="2.6"/><path d="M7 17L17 7" stroke="#9fb0ca" stroke-width="2.4"/></svg>
<div class="t" style="left:1358px;top:1390.88px;font-size:12.28px;color:#d6deea;font-weight:700;letter-spacing:0.83px;">Loop idle</div>
<div class="a" style="left:375.6px;top:1433.6px;width:2249.6px;height:154.4px;border-radius:12px;overflow:hidden;background:linear-gradient(90deg,#3d4656,#3d4656 50%,#424b5a 78%,#3d4555);box-shadow:inset 0 0 0 1.2px rgba(255,255,255,.04)">
<div class="a" style="left:317.2px;top:0;width:1288.8px;height:100%;background:linear-gradient(90deg,#24466f,#294b74 55%,#2a4c77)"></div>
</div>
<svg class="a" style="left:388px;top:1456px;width:18.4px;height:18.4px;overflow:visible;opacity:0.88;" viewBox="0 0 24 24"><circle cx="12" cy="13" r="7.500" fill="none" stroke="#dfe5ee" stroke-width="2.4"/><path d="M12 13V9M9.500 3h5" stroke="#dfe5ee" stroke-width="2.2"/></svg>
<div class="t" style="left:418px;top:1458.67px;font-size:14.51px;color:#f4f6fa;font-weight:700;letter-spacing:0.36px;">Velocità Riproduzione</div>
<div class="a" style="left:1292px;top:1452px;width:63.2px;height:23.6px;background:#39597f;border-radius:5.6px;box-shadow:inset 0 0 0 1.2px #4b688e;"></div>
<div class="t" style="left:1302.4px;top:1458.48px;font-size:12.28px;color:#eef2f8;font-weight:700;letter-spacing:2.34px;">0.25x</div>
<div class="a" style="left:1368.8px;top:1452px;width:61.6px;height:23.6px;background:#39597f;border-radius:5.6px;box-shadow:inset 0 0 0 1.2px #4b688e;"></div>
<div class="t" style="left:1379.2px;top:1458.48px;font-size:12.28px;color:#eef2f8;font-weight:700;letter-spacing:2.02px;">0.50x</div>
<div class="a" style="left:1442.4px;top:1452px;width:61.6px;height:23.6px;background:#39597f;border-radius:5.6px;box-shadow:inset 0 0 0 1.2px #4b688e;"></div>
<div class="t" style="left:1452.8px;top:1458.48px;font-size:12.28px;color:#eef2f8;font-weight:700;letter-spacing:2.02px;">1.00x</div>
<div class="a" style="left:1516.8px;top:1452px;width:60.8px;height:23.6px;background:#39597f;border-radius:5.6px;box-shadow:inset 0 0 0 1.2px #4b688e;"></div>
<div class="t" style="left:1527.2px;top:1458.48px;font-size:12.28px;color:#eef2f8;font-weight:700;letter-spacing:1.86px;">1.50x</div>
<div class="a" style="left:1589.2px;top:1452px;width:62.8px;height:23.6px;background:#39597f;border-radius:5.6px;box-shadow:inset 0 0 0 1.2px #4b688e;"></div>
<div class="t" style="left:1599.6px;top:1458.48px;font-size:12.28px;color:#eef2f8;font-weight:700;letter-spacing:2.26px;">2.00x</div>
<div class="a" style="left:2368px;top:1450.8px;width:172.8px;height:28.8px;background:#535d6c;border-radius:6.4px;box-shadow:inset 0 0 0 1.4px #6b7483;"></div>
<svg class="a" style="left:2381.6px;top:1456.4px;width:17.6px;height:17.6px;overflow:visible;opacity:0.88;" viewBox="0 0 24 24"><path d="M5 12a7 7 0 107-7H8M11 2L8 5l3 3" fill="none" stroke="#e6eaf1" stroke-width="2.2"/></svg>
<div class="t" style="left:2410.4px;top:1458.67px;font-size:14.51px;color:#f4f6fa;font-weight:700;letter-spacing:1.49px;">Reset velocità</div>
<div class="t" style="left:2551.2px;top:1456.6px;font-size:18.23px;color:#3fe0b5;font-weight:700;letter-spacing:2.96px;">0.75x</div>
<div class="a" style="left:388px;top:1501.2px;width:2226.4px;height:4px;background:rgba(170,190,215,.36);border-radius:2px;"></div>
<div class="a" style="left:388px;top:1497.2px;width:642px;height:10.4px;background:#f09a3e;border-radius:5.2px;"></div>
<div class="a" style="left:1015.2px;top:1492px;width:28.8px;height:20.8px;background:#f4f6f9;border-radius:10.4px;box-shadow:0 0 2.8px rgba(0,0,0,.4);"></div>
<div class="a" style="left:1022.4px;top:1498px;width:14.4px;height:8.8px;background:#dde1e8;border-radius:4.4px;"></div>
<div class="t" style="left:404.8px;top:1530.48px;font-size:12.28px;color:#b5c1d4;font-weight:700;letter-spacing:1.54px;">0.25x</div>
<div class="a" style="left:578.04px;top:1508.8px;width:1.6px;height:6.8px;background:rgba(200,212,230,.5);"></div>
<div class="t" style="left:559.64px;top:1530.48px;font-size:12.28px;color:#b5c1d4;font-weight:700;letter-spacing:1.54px;">0.40x</div>
<div class="a" style="left:705.26px;top:1508.8px;width:1.6px;height:6.8px;background:rgba(200,212,230,.5);"></div>
<div class="t" style="left:686.86px;top:1530.48px;font-size:12.28px;color:#b5c1d4;font-weight:700;letter-spacing:1.54px;">0.50x</div>
<div class="a" style="left:832.48px;top:1508.8px;width:1.6px;height:6.8px;background:rgba(200,212,230,.5);"></div>
<div class="t" style="left:814.08px;top:1530.48px;font-size:12.28px;color:#b5c1d4;font-weight:700;letter-spacing:1.54px;">0.60x</div>
<div class="a" style="left:1086.93px;top:1508.8px;width:1.6px;height:6.8px;background:rgba(200,212,230,.5);"></div>
<div class="t" style="left:1068.53px;top:1530.48px;font-size:12.28px;color:#b5c1d4;font-weight:700;letter-spacing:1.54px;">0.80x</div>
<div class="a" style="left:1341.38px;top:1508.8px;width:1.6px;height:6.8px;background:rgba(200,212,230,.5);"></div>
<div class="t" style="left:1321.78px;top:1530.14px;font-size:13.02px;color:#ffffff;font-weight:700;letter-spacing:1.64px;">1.00x</div>
<div class="a" style="left:1595.83px;top:1508.8px;width:1.6px;height:6.8px;background:rgba(200,212,230,.5);"></div>
<div class="t" style="left:1577.43px;top:1530.48px;font-size:12.28px;color:#b5c1d4;font-weight:700;letter-spacing:1.54px;">1.20x</div>
<div class="a" style="left:1850.28px;top:1508.8px;width:1.6px;height:6.8px;background:rgba(200,212,230,.5);"></div>
<div class="t" style="left:1831.88px;top:1530.48px;font-size:12.28px;color:#b5c1d4;font-weight:700;letter-spacing:1.54px;">1.40x</div>
<div class="a" style="left:1977.5px;top:1508.8px;width:1.6px;height:6.8px;background:rgba(200,212,230,.5);"></div>
<div class="t" style="left:1959.1px;top:1530.48px;font-size:12.28px;color:#b5c1d4;font-weight:700;letter-spacing:1.54px;">1.50x</div>
<div class="a" style="left:2104.72px;top:1508.8px;width:1.6px;height:6.8px;background:rgba(200,212,230,.5);"></div>
<div class="t" style="left:2086.32px;top:1530.48px;font-size:12.28px;color:#b5c1d4;font-weight:700;letter-spacing:1.54px;">1.60x</div>
<div class="a" style="left:2359.17px;top:1508.8px;width:1.6px;height:6.8px;background:rgba(200,212,230,.5);"></div>
<div class="t" style="left:2340.77px;top:1530.48px;font-size:12.28px;color:#b5c1d4;font-weight:700;letter-spacing:1.54px;">1.80x</div>
<div class="t" style="left:2555.6px;top:1530.48px;font-size:12.28px;color:#b5c1d4;font-weight:700;letter-spacing:1.7px;">2.00x</div>
<div class="a" style="left:388px;top:1561.2px;width:10.4px;height:10.4px;background:#3ccfaa;border-radius:3.2px;box-shadow:0 0 3.2px rgba(60,207,170,.5);"></div>
<div class="a" style="left:390.8px;top:1564px;width:4.8px;height:4.8px;background:#c9f5e8;border-radius:1.6px;"></div>
<div class="t" style="left:408px;top:1559.68px;font-size:12.28px;color:#d3dbe8;font-weight:700;letter-spacing:0.95px;">Zona ottimale qualità/prestazioni</div>
</div>
</body></html>
